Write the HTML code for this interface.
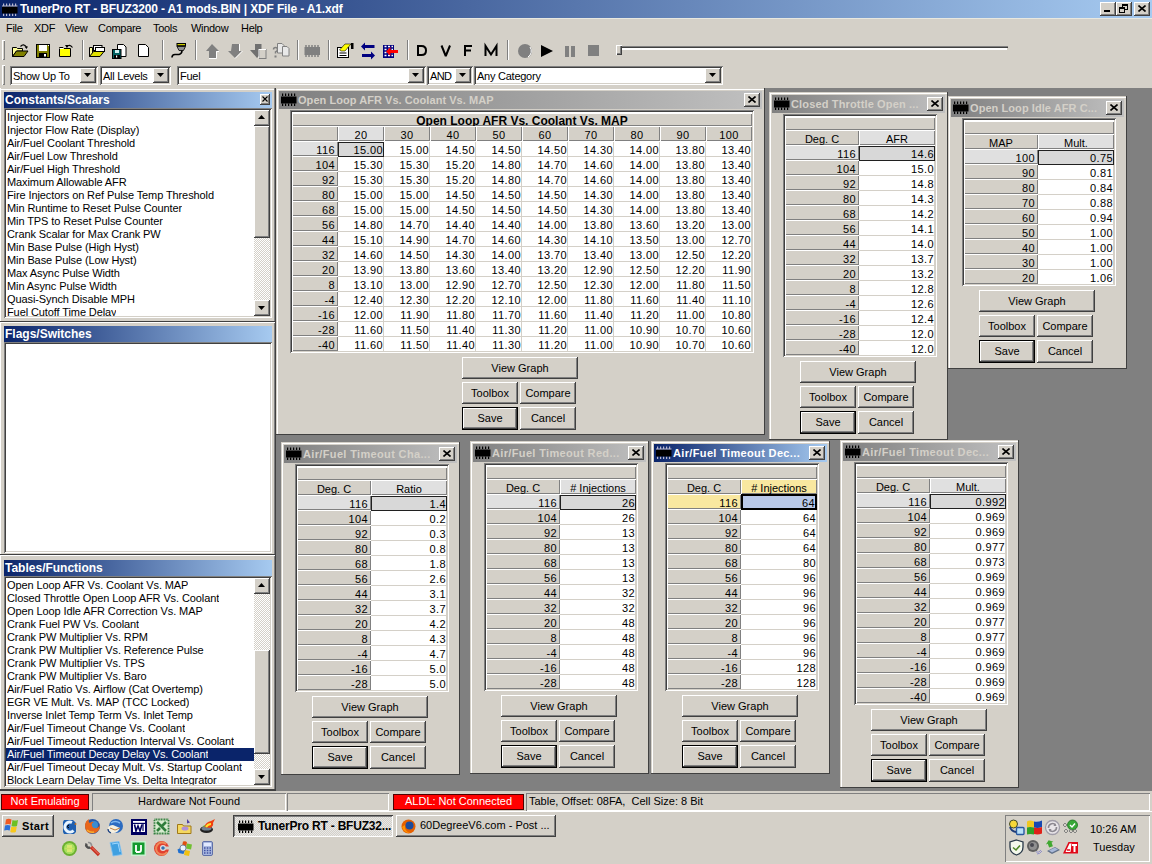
<!DOCTYPE html><html><head><meta charset="utf-8"><style>
html,body{margin:0;padding:0;width:1152px;height:864px;overflow:hidden;background:#D4D0C8;}
body{position:relative;font-family:"Liberation Sans",sans-serif;font-size:11px;color:#000;}
div{position:absolute;box-sizing:border-box;}
</style></head><body>
<div style="left:0px;top:0px;width:1152px;height:18px;background:linear-gradient(to right,#0A246A,#A6CAF0);"></div>
<svg style="position:absolute;left:2px;top:3px" width="17" height="13" viewBox="0 0 17 13"><rect x="1.0" y="0.5" width="1.2" height="2.5" fill="#B8B8D0"/><rect x="1.0" y="10.5" width="1.2" height="2.5" fill="#B8B8D0"/><rect x="4.0" y="0.5" width="1.2" height="2.5" fill="#B8B8D0"/><rect x="4.0" y="10.5" width="1.2" height="2.5" fill="#B8B8D0"/><rect x="7.0" y="0.5" width="1.2" height="2.5" fill="#B8B8D0"/><rect x="7.0" y="10.5" width="1.2" height="2.5" fill="#B8B8D0"/><rect x="10.0" y="0.5" width="1.2" height="2.5" fill="#B8B8D0"/><rect x="10.0" y="10.5" width="1.2" height="2.5" fill="#B8B8D0"/><rect x="13.0" y="0.5" width="1.2" height="2.5" fill="#B8B8D0"/><rect x="13.0" y="10.5" width="1.2" height="2.5" fill="#B8B8D0"/><rect x="0" y="3.5" width="15.5" height="7" fill="#000"/><rect x="0" y="2.5" width="15.5" height="1" fill="#B8B8D0"/></svg>
<div style="left:20px;top:2px;white-space:nowrap;color:#fff;font-weight:bold;font-size:12px;line-height:14px;letter-spacing:-0.15px">TunerPro RT - BFUZ3200 - A1 mods.BIN | XDF File - A1.xdf</div>
<div style="left:1100px;top:2px;width:16px;height:14px;background:#D4D0C8;box-shadow:inset -1px -1px #404040,inset 1px 1px #fff,inset -2px -2px #808080,inset 2px 2px #D4D0C8;"></div>
<div style="left:1104px;top:10px;width:6px;height:2px;background:#000"></div>
<div style="left:1116px;top:2px;width:16px;height:14px;background:#D4D0C8;box-shadow:inset -1px -1px #404040,inset 1px 1px #fff,inset -2px -2px #808080,inset 2px 2px #D4D0C8;"></div>
<svg style="position:absolute;left:1119px;top:4px" width="10" height="10" viewBox="0 0 10 10"><rect x="3.5" y="0.5" width="5" height="5" fill="none" stroke="#000"/><rect x="3" y="0" width="6" height="2" fill="#000"/><rect x="0.5" y="3.5" width="5" height="5" fill="#D4D0C8" stroke="#000"/><rect x="0" y="3" width="6" height="2" fill="#000"/></svg>
<div style="left:1134px;top:2px;width:16px;height:14px;background:#D4D0C8;box-shadow:inset -1px -1px #404040,inset 1px 1px #fff,inset -2px -2px #808080,inset 2px 2px #D4D0C8;"></div>
<svg style="position:absolute;left:1138px;top:5px" width="8" height="7" viewBox="0 0 8 7"><path d="M0.5 0.5L7.5 6.5M7.5 0.5L0.5 6.5" stroke="#000" stroke-width="1.6"/></svg>
<div style="left:0px;top:18px;width:1152px;height:1px;background:#E8E8E0"></div>
<div style="left:6px;top:22px;white-space:nowrap;line-height:13px;letter-spacing:-0.3px">File</div>
<div style="left:34px;top:22px;white-space:nowrap;line-height:13px;letter-spacing:-0.3px">XDF</div>
<div style="left:65px;top:22px;white-space:nowrap;line-height:13px;letter-spacing:-0.3px">View</div>
<div style="left:98px;top:22px;white-space:nowrap;line-height:13px;letter-spacing:-0.3px">Compare</div>
<div style="left:153px;top:22px;white-space:nowrap;line-height:13px;letter-spacing:-0.3px">Tools</div>
<div style="left:191px;top:22px;white-space:nowrap;line-height:13px;letter-spacing:-0.3px">Window</div>
<div style="left:241px;top:22px;white-space:nowrap;line-height:13px;letter-spacing:-0.3px">Help</div>
<div style="left:2px;top:40px;width:3px;height:20px;box-shadow:inset 1px 1px #fff,inset -1px -1px #808080"></div>
<svg style="position:absolute;left:0;top:38px" width="640" height="24" viewBox="0 0 640 24">
<!-- open folder 1 -->
<path d="M12.5 9.5h4l1 1h5v2.5h-6l-4 5.5z" fill="#FFFF99" stroke="#000"/>
<path d="M12.5 18.5l4-5.5h11.5l-4 5.5z" fill="#808000" stroke="#000"/>
<path d="M20.5 8.5q3-3.5 6 0.5" fill="none" stroke="#000" stroke-width="1.2"/><path d="M24.5 8.5h3.5l-1.5 2.5z" fill="#000"/>
<!-- save -->
<rect x="36.5" y="6.5" width="13" height="13" fill="#808000" stroke="#000"/>
<rect x="39" y="7" width="8" height="6" fill="#fff"/>
<rect x="39" y="15" width="8" height="4.5" fill="#000"/><rect x="44" y="16" width="2" height="2.5" fill="#fff"/>
<rect x="48" y="7" width="1" height="1" fill="#fff"/>
<!-- closed folder with arrow -->
<path d="M59.5 9.5h3.5l1 1h6.5v8h-11z" fill="#FFFF00" stroke="#000"/>
<path d="M59.5 10.5h4" stroke="#fff" stroke-width="1"/>
<path d="M66.5 9q3-3.5 6 0.5" fill="none" stroke="#000" stroke-width="1.2"/><path d="M65 7h3.5l-1.5 3z" fill="#000"/>
<!-- open multiple -->
<path d="M89.5 9.5h3v9h-3z" fill="#FFFF99" stroke="#000"/>
<rect x="93.5" y="7.5" width="8.5" height="5" fill="#fff" stroke="#000"/>
<rect x="95.5" y="9.5" width="9" height="4" fill="#fff" stroke="#000"/>
<path d="M89.5 18.5l4-5h10.5l-4 5z" fill="#E0E000" stroke="#000"/>
<!-- save multiple -->
<path d="M117.5 6.5h6l2.5 2.5v9.5h-8.5z" fill="#fff" stroke="#000"/>
<rect x="112.5" y="11.5" width="8.5" height="9" fill="#006060" stroke="#000"/>
<rect x="115" y="12" width="4" height="3" fill="#D0F0F0"/>
<rect x="114" y="17" width="6" height="3" fill="#000"/><rect x="116" y="17.5" width="1.2" height="2" fill="#fff"/>
<!-- new doc -->
<path d="M138.5 6.5h7l3 3v9h-10z" fill="#fff" stroke="#000"/>
<!-- plug -->
<rect x="176.5" y="5" width="9.5" height="3.5" fill="#000"/>
<rect x="177.5" y="6" width="7.5" height="1.2" fill="#CCCC00"/>
<path d="M177 8.5h8.5l-2 4h-4.5z" fill="#909090" stroke="#000" stroke-width="0.8"/>
<path d="M182 12.5q0 3-3 4h-4q-3 0-3 3" fill="none" stroke="#000" stroke-width="1.6"/>
<!-- up arrow -->
<path d="M212 6l7 7h-3v7h-7v-7h-3z" fill="#808080"/>
<path d="M216.5 13.5h2.5M216.5 13.5v7M209 20.5h7.5" stroke="#fff" stroke-width="1"/>
<!-- down arrow -->
<path d="M232 6h7v7h3l-7 7-7-7h3z" fill="#808080"/>
<path d="M242.5 13l-7.5 7.5M239.5 6v7" stroke="#fff" stroke-width="1"/>
<!-- down + doc -->
<path d="M255 6h6.5v6h3l-7.5 8-7-8h5z" fill="#707070"/>
<rect x="259.5" y="11.5" width="6.5" height="9" fill="#D4D0C8" stroke="#808080"/>
<path d="M259 11.5h7M259 11v9" stroke="#fff" stroke-width="1"/>
<!-- ?doc -->
<path d="M273.5 11.5q0-2 2-2t2 2q0 1.5-2 2.5v1.5" fill="none" stroke="#808080" stroke-width="1.5"/><rect x="274.5" y="17.5" width="2" height="2" fill="#808080"/>
<path d="M277.5 5.5h4.5l2 2v7.5h-6.5z" fill="#E8E8E8" stroke="#808080"/>
<path d="M282.5 8.5h4.5l2 2v7.5h-6.5z" fill="#E8E8E8" stroke="#808080"/>
<!-- gray chip -->
<rect x="304.5" y="9" width="15.5" height="8" fill="#808080"/>
<path d="M306 7v2M309 7v2M312 7v2M315 7v2M318 7v2M306 17v2M309 17v2M312 17v2M315 17v2M318 17v2" stroke="#808080" stroke-width="1.5"/>
<!-- properties -->
<rect x="337.5" y="9.5" width="11" height="10" fill="#fff" stroke="#000"/>
<path d="M339.5 15h7M339.5 17.5h7" stroke="#000" stroke-width="1"/>
<path d="M339.5 12l5.5-6h6l-6 7h-4z" fill="#FFFF00" stroke="#000" stroke-width="0.6"/>
<rect x="351" y="5" width="2.5" height="6" fill="#000"/>
<!-- swap arrows -->
<path d="M361 8.5l4-4v2.5h9.5v3h-9.5v2.5z" fill="#000080"/>
<path d="M375 17.5l-4-4v2.5h-9v3h9v2.5z" fill="#000080"/>
<!-- grid + red arrow -->
<rect x="383" y="7" width="11" height="13" fill="#000080"/>
<path d="M384.5 8.5h2M388 8.5h2M391.5 8.5h1.5M384.5 11.5h2M388 11.5h2M391.5 11.5h1.5M384.5 14.5h2M388 14.5h2M391.5 14.5h1.5M384.5 17.5h2M388 17.5h2M391.5 17.5h1.5" stroke="#fff" stroke-width="1.6"/>
<path d="M386 13.5l4.5-4.5v3h7.5v3h-7.5v3z" fill="#FF0000"/>
<!-- DVFM -->
<path d="M418 8h3.5q4.5 0 4.5 4.5t-4.5 4.5h-3.5z" fill="none" stroke="#000" stroke-width="2"/>
<path d="M441.5 7.5l4.25 10.5l4.25-10.5" fill="none" stroke="#000" stroke-width="2" stroke-linejoin="bevel"/>
<path d="M465 18V8h7M465 12.5h6" fill="none" stroke="#000" stroke-width="2"/>
<path d="M485.5 18V8l5.5 8.5 5.5-8.5v10" fill="none" stroke="#000" stroke-width="2" stroke-linejoin="miter"/>
<!-- record -->
<circle cx="525" cy="13" r="7" fill="#808080"/><path d="M530 9a7 7 0 0 1 -2 10" stroke="#fff" stroke-width="1" fill="none"/>
<!-- play -->
<path d="M541 7l12 6-12 6z" fill="#000"/>
<!-- pause -->
<rect x="565" y="8" width="4" height="11" fill="#808080"/><rect x="571" y="8" width="4" height="11" fill="#808080"/>
<!-- stop -->
<rect x="588" y="7" width="11" height="11" fill="#808080"/>
</svg>
<div style="left:82px;top:40px;width:2px;height:20px;box-shadow:inset 1px 0 #808080,inset -1px 0 #fff"></div>
<div style="left:162px;top:40px;width:2px;height:20px;box-shadow:inset 1px 0 #808080,inset -1px 0 #fff"></div>
<div style="left:195px;top:40px;width:2px;height:20px;box-shadow:inset 1px 0 #808080,inset -1px 0 #fff"></div>
<div style="left:297px;top:40px;width:2px;height:20px;box-shadow:inset 1px 0 #808080,inset -1px 0 #fff"></div>
<div style="left:328px;top:40px;width:2px;height:20px;box-shadow:inset 1px 0 #808080,inset -1px 0 #fff"></div>
<div style="left:407px;top:40px;width:2px;height:20px;box-shadow:inset 1px 0 #808080,inset -1px 0 #fff"></div>
<div style="left:507px;top:40px;width:2px;height:20px;box-shadow:inset 1px 0 #808080,inset -1px 0 #fff"></div>
<div style="left:617px;top:46px;width:391px;height:5px;box-shadow:inset 0 1px #808080,inset 0 2px #404040,inset -1px -1px #D4D0C8;background:#fff"></div>
<div style="left:616px;top:45px;width:6px;height:10px;background:#D4D0C8;box-shadow:inset 1px 1px #fff,inset -1px -1px #404040,inset -2px -2px #808080"></div>
<div style="left:2px;top:65px;width:3px;height:20px;box-shadow:inset 1px 1px #fff,inset -1px -1px #808080"></div>
<div style="left:10px;top:66px;width:88px;height:19px;background:#fff;box-shadow:inset 1px 1px #808080,inset -1px -1px #fff,inset 2px 2px #404040,inset -2px -2px #D4D0C8;"></div>
<div style="left:13px;top:70px;white-space:nowrap;line-height:13px;letter-spacing:-0.25px;">Show Up To</div>
<div style="left:80px;top:68px;width:16px;height:15px;background:#D4D0C8;box-shadow:inset -1px -1px #404040,inset 1px 1px #fff,inset -2px -2px #808080,inset 2px 2px #D4D0C8;"><svg style="position:absolute;left:4px;top:5px" width="8" height="5"><path d="M0 0h7l-3.5 4z" fill="#000"/></svg></div>
<div style="left:100px;top:66px;width:71px;height:19px;background:#fff;box-shadow:inset 1px 1px #808080,inset -1px -1px #fff,inset 2px 2px #404040,inset -2px -2px #D4D0C8;"></div>
<div style="left:103px;top:70px;white-space:nowrap;line-height:13px;letter-spacing:-0.25px;">All Levels</div>
<div style="left:153px;top:68px;width:16px;height:15px;background:#D4D0C8;box-shadow:inset -1px -1px #404040,inset 1px 1px #fff,inset -2px -2px #808080,inset 2px 2px #D4D0C8;"><svg style="position:absolute;left:4px;top:5px" width="8" height="5"><path d="M0 0h7l-3.5 4z" fill="#000"/></svg></div>
<div style="left:177px;top:66px;width:249px;height:19px;background:#fff;box-shadow:inset 1px 1px #808080,inset -1px -1px #fff,inset 2px 2px #404040,inset -2px -2px #D4D0C8;"></div>
<div style="left:180px;top:70px;white-space:nowrap;line-height:13px;letter-spacing:-0.25px;">Fuel</div>
<div style="left:408px;top:68px;width:16px;height:15px;background:#D4D0C8;box-shadow:inset -1px -1px #404040,inset 1px 1px #fff,inset -2px -2px #808080,inset 2px 2px #D4D0C8;"><svg style="position:absolute;left:4px;top:5px" width="8" height="5"><path d="M0 0h7l-3.5 4z" fill="#000"/></svg></div>
<div style="left:427px;top:66px;width:46px;height:19px;background:#fff;box-shadow:inset 1px 1px #808080,inset -1px -1px #fff,inset 2px 2px #404040,inset -2px -2px #D4D0C8;"></div>
<div style="left:430px;top:70px;white-space:nowrap;line-height:13px;letter-spacing:-0.25px;letter-spacing:-0.6px">AND</div>
<div style="left:455px;top:68px;width:16px;height:15px;background:#D4D0C8;box-shadow:inset -1px -1px #404040,inset 1px 1px #fff,inset -2px -2px #808080,inset 2px 2px #D4D0C8;"><svg style="position:absolute;left:4px;top:5px" width="8" height="5"><path d="M0 0h7l-3.5 4z" fill="#000"/></svg></div>
<div style="left:474px;top:66px;width:249px;height:19px;background:#fff;box-shadow:inset 1px 1px #808080,inset -1px -1px #fff,inset 2px 2px #404040,inset -2px -2px #D4D0C8;"></div>
<div style="left:477px;top:70px;white-space:nowrap;line-height:13px;letter-spacing:-0.25px;">Any Category</div>
<div style="left:705px;top:68px;width:16px;height:15px;background:#D4D0C8;box-shadow:inset -1px -1px #404040,inset 1px 1px #fff,inset -2px -2px #808080,inset 2px 2px #D4D0C8;"><svg style="position:absolute;left:4px;top:5px" width="8" height="5"><path d="M0 0h7l-3.5 4z" fill="#000"/></svg></div>
<div style="left:0px;top:88px;width:276px;height:703px;background:#D4D0C8"></div>
<div style="left:0px;top:88px;width:1px;height:703px;background:#fff"></div>
<div style="left:0px;top:89px;width:275px;height:1px;background:#fff"></div>
<div style="left:274px;top:88px;width:1px;height:703px;background:#808080"></div>
<div style="left:275px;top:88px;width:1px;height:703px;background:#404040"></div>
<div style="left:0px;top:321px;width:275px;height:1px;background:#404040"></div>
<div style="left:0px;top:322px;width:275px;height:1px;background:#fff"></div>
<div style="left:0px;top:554px;width:275px;height:1px;background:#404040"></div>
<div style="left:0px;top:555px;width:275px;height:1px;background:#fff"></div>
<div style="left:4px;top:92px;width:268px;height:16px;background:linear-gradient(to right,#0A246A,#A6CAF0);"></div>
<div style="left:5px;top:93px;white-space:nowrap;color:#fff;font-weight:bold;font-size:12px;line-height:14px">Constants/Scalars</div>
<div style="left:4px;top:108px;width:268px;height:210px;background:#fff;box-shadow:inset 1px 1px #808080,inset -1px -1px #fff,inset 2px 2px #404040,inset -2px -2px #D4D0C8;"></div>
<div style="left:7px;top:111px;white-space:nowrap;letter-spacing:-0.1px;line-height:13px;overflow:hidden;height:13px">Injector Flow Rate</div>
<div style="left:7px;top:124px;white-space:nowrap;letter-spacing:-0.1px;line-height:13px;overflow:hidden;height:13px">Injector Flow Rate (Display)</div>
<div style="left:7px;top:137px;white-space:nowrap;letter-spacing:-0.1px;line-height:13px;overflow:hidden;height:13px">Air/Fuel Coolant Threshold</div>
<div style="left:7px;top:150px;white-space:nowrap;letter-spacing:-0.1px;line-height:13px;overflow:hidden;height:13px">Air/Fuel Low Threshold</div>
<div style="left:7px;top:163px;white-space:nowrap;letter-spacing:-0.1px;line-height:13px;overflow:hidden;height:13px">Air/Fuel High Threshold</div>
<div style="left:7px;top:176px;white-space:nowrap;letter-spacing:-0.1px;line-height:13px;overflow:hidden;height:13px">Maximum Allowable AFR</div>
<div style="left:7px;top:189px;white-space:nowrap;letter-spacing:-0.1px;line-height:13px;overflow:hidden;height:13px">Fire Injectors on Ref Pulse Temp Threshold</div>
<div style="left:7px;top:202px;white-space:nowrap;letter-spacing:-0.1px;line-height:13px;overflow:hidden;height:13px">Min Runtime to Reset Pulse Counter</div>
<div style="left:7px;top:215px;white-space:nowrap;letter-spacing:-0.1px;line-height:13px;overflow:hidden;height:13px">Min TPS to Reset Pulse Counter</div>
<div style="left:7px;top:228px;white-space:nowrap;letter-spacing:-0.1px;line-height:13px;overflow:hidden;height:13px">Crank Scalar for Max Crank PW</div>
<div style="left:7px;top:241px;white-space:nowrap;letter-spacing:-0.1px;line-height:13px;overflow:hidden;height:13px">Min Base Pulse (High Hyst)</div>
<div style="left:7px;top:254px;white-space:nowrap;letter-spacing:-0.1px;line-height:13px;overflow:hidden;height:13px">Min Base Pulse (Low Hyst)</div>
<div style="left:7px;top:267px;white-space:nowrap;letter-spacing:-0.1px;line-height:13px;overflow:hidden;height:13px">Max Async Pulse Width</div>
<div style="left:7px;top:280px;white-space:nowrap;letter-spacing:-0.1px;line-height:13px;overflow:hidden;height:13px">Min Async Pulse Width</div>
<div style="left:7px;top:293px;white-space:nowrap;letter-spacing:-0.1px;line-height:13px;overflow:hidden;height:13px">Quasi-Synch Disable MPH</div>
<div style="left:7px;top:306px;white-space:nowrap;letter-spacing:-0.1px;line-height:13px;overflow:hidden;height:10px">Fuel Cutoff Time Delay</div>
<div style="left:254px;top:110px;width:16px;height:206px;background-color:#fff;background-image:linear-gradient(45deg,#D4D0C8 25%,transparent 25%,transparent 75%,#D4D0C8 75%),linear-gradient(45deg,#D4D0C8 25%,transparent 25%,transparent 75%,#D4D0C8 75%);background-size:2px 2px;background-position:0 0,1px 1px;"></div>
<div style="left:254px;top:110px;width:16px;height:16px;background:#D4D0C8;box-shadow:inset -1px -1px #404040,inset 1px 1px #fff,inset -2px -2px #808080,inset 2px 2px #D4D0C8;"><svg style="position:absolute;left:4px;top:5px" width="8" height="5"><path d="M3.5 0L7 4H0z" fill="#000"/></svg></div>
<div style="left:254px;top:300px;width:16px;height:16px;background:#D4D0C8;box-shadow:inset -1px -1px #404040,inset 1px 1px #fff,inset -2px -2px #808080,inset 2px 2px #D4D0C8;"><svg style="position:absolute;left:4px;top:6px" width="8" height="5"><path d="M0 0h7l-3.5 4z" fill="#000"/></svg></div>
<div style="left:254px;top:126px;width:16px;height:112px;background:#D4D0C8;box-shadow:inset -1px -1px #404040,inset 1px 1px #fff,inset -2px -2px #808080,inset 2px 2px #D4D0C8;"></div>
<div style="left:260px;top:94px;width:10px;height:11px;background:#D4D0C8;box-shadow:inset -1px -1px #404040,inset 1px 1px #fff,inset -2px -2px #808080;"><svg style="position:absolute;left:2px;top:2px" width="6" height="6" viewBox="0 0 6 6"><path d="M0.5 0.5L5.5 5.5M5.5 0.5L0.5 5.5" stroke="#000" stroke-width="1.1"/></svg></div>
<div style="left:4px;top:326px;width:268px;height:16px;background:linear-gradient(to right,#0A246A,#A6CAF0);"></div>
<div style="left:5px;top:327px;white-space:nowrap;color:#fff;font-weight:bold;font-size:12px;line-height:14px">Flags/Switches</div>
<div style="left:4px;top:342px;width:268px;height:211px;background:#fff;box-shadow:inset 1px 1px #808080,inset -1px -1px #fff,inset 2px 2px #404040,inset -2px -2px #D4D0C8;"></div>
<div style="left:4px;top:560px;width:268px;height:16px;background:linear-gradient(to right,#0A246A,#A6CAF0);"></div>
<div style="left:5px;top:561px;white-space:nowrap;color:#fff;font-weight:bold;font-size:12px;line-height:14px">Tables/Functions</div>
<div style="left:4px;top:576px;width:268px;height:211px;background:#fff;box-shadow:inset 1px 1px #808080,inset -1px -1px #fff,inset 2px 2px #404040,inset -2px -2px #D4D0C8;"></div>
<div style="left:7px;top:579px;white-space:nowrap;letter-spacing:-0.1px;line-height:13px;overflow:hidden;height:13px">Open Loop AFR Vs. Coolant Vs. MAP</div>
<div style="left:7px;top:592px;white-space:nowrap;letter-spacing:-0.1px;line-height:13px;overflow:hidden;height:13px">Closed Throttle Open Loop AFR Vs. Coolant</div>
<div style="left:7px;top:605px;white-space:nowrap;letter-spacing:-0.1px;line-height:13px;overflow:hidden;height:13px">Open Loop Idle AFR Correction Vs. MAP</div>
<div style="left:7px;top:618px;white-space:nowrap;letter-spacing:-0.1px;line-height:13px;overflow:hidden;height:13px">Crank Fuel PW Vs. Coolant</div>
<div style="left:7px;top:631px;white-space:nowrap;letter-spacing:-0.1px;line-height:13px;overflow:hidden;height:13px">Crank PW Multiplier Vs. RPM</div>
<div style="left:7px;top:644px;white-space:nowrap;letter-spacing:-0.1px;line-height:13px;overflow:hidden;height:13px">Crank PW Multiplier Vs. Reference Pulse</div>
<div style="left:7px;top:657px;white-space:nowrap;letter-spacing:-0.1px;line-height:13px;overflow:hidden;height:13px">Crank PW Multiplier Vs. TPS</div>
<div style="left:7px;top:670px;white-space:nowrap;letter-spacing:-0.1px;line-height:13px;overflow:hidden;height:13px">Crank PW Multiplier Vs. Baro</div>
<div style="left:7px;top:683px;white-space:nowrap;letter-spacing:-0.1px;line-height:13px;overflow:hidden;height:13px">Air/Fuel Ratio Vs. Airflow (Cat Overtemp)</div>
<div style="left:7px;top:696px;white-space:nowrap;letter-spacing:-0.1px;line-height:13px;overflow:hidden;height:13px">EGR VE Mult. Vs. MAP (TCC Locked)</div>
<div style="left:7px;top:709px;white-space:nowrap;letter-spacing:-0.1px;line-height:13px;overflow:hidden;height:13px">Inverse Inlet Temp Term Vs. Inlet Temp</div>
<div style="left:7px;top:722px;white-space:nowrap;letter-spacing:-0.1px;line-height:13px;overflow:hidden;height:13px">Air/Fuel Timeout Change Vs. Coolant</div>
<div style="left:7px;top:735px;white-space:nowrap;letter-spacing:-0.1px;line-height:13px;overflow:hidden;height:13px">Air/Fuel Timeout Reduction Interval Vs. Coolant</div>
<div style="left:6px;top:748px;width:248px;height:13px;background:#0A246A"></div>
<div style="left:7px;top:748px;white-space:nowrap;letter-spacing:-0.1px;line-height:13px;color:#fff;overflow:hidden;height:13px">Air/Fuel Timeout Decay Delay Vs. Coolant</div>
<div style="left:7px;top:761px;white-space:nowrap;letter-spacing:-0.1px;line-height:13px;overflow:hidden;height:13px">Air/Fuel Timeout Decay Mult. Vs. Startup Coolant</div>
<div style="left:7px;top:774px;white-space:nowrap;letter-spacing:-0.1px;line-height:13px;overflow:hidden;height:11px">Block Learn Delay Time Vs. Delta Integrator</div>
<div style="left:254px;top:578px;width:16px;height:207px;background-color:#fff;background-image:linear-gradient(45deg,#D4D0C8 25%,transparent 25%,transparent 75%,#D4D0C8 75%),linear-gradient(45deg,#D4D0C8 25%,transparent 25%,transparent 75%,#D4D0C8 75%);background-size:2px 2px;background-position:0 0,1px 1px;"></div>
<div style="left:254px;top:578px;width:16px;height:16px;background:#D4D0C8;box-shadow:inset -1px -1px #404040,inset 1px 1px #fff,inset -2px -2px #808080,inset 2px 2px #D4D0C8;"><svg style="position:absolute;left:4px;top:5px" width="8" height="5"><path d="M3.5 0L7 4H0z" fill="#000"/></svg></div>
<div style="left:254px;top:769px;width:16px;height:16px;background:#D4D0C8;box-shadow:inset -1px -1px #404040,inset 1px 1px #fff,inset -2px -2px #808080,inset 2px 2px #D4D0C8;"><svg style="position:absolute;left:4px;top:6px" width="8" height="5"><path d="M0 0h7l-3.5 4z" fill="#000"/></svg></div>
<div style="left:254px;top:650px;width:16px;height:104px;background:#D4D0C8;box-shadow:inset -1px -1px #404040,inset 1px 1px #fff,inset -2px -2px #808080,inset 2px 2px #D4D0C8;"></div>
<div style="left:0px;top:789px;width:275px;height:2px;background:#404040"></div>
<div style="left:276px;top:88px;width:876px;height:703px;background:#808080"></div>
<div style="left:276px;top:88px;width:489px;height:347px;background:#D4D0C8;box-shadow:inset -1px -1px #404040,inset 1px 1px #D4D0C8,inset 2px 2px #fff;"></div>
<div style="left:279px;top:91px;width:483px;height:18px;background:linear-gradient(to right,#808080,#C0C0C0)"></div>
<svg style="position:absolute;left:281px;top:93px" width="17" height="13" viewBox="0 0 17 13"><rect x="1.0" y="0.5" width="1.2" height="2.5" fill="#000"/><rect x="1.0" y="10.5" width="1.2" height="2.5" fill="#000"/><rect x="4.0" y="0.5" width="1.2" height="2.5" fill="#000"/><rect x="4.0" y="10.5" width="1.2" height="2.5" fill="#000"/><rect x="7.0" y="0.5" width="1.2" height="2.5" fill="#000"/><rect x="7.0" y="10.5" width="1.2" height="2.5" fill="#000"/><rect x="10.0" y="0.5" width="1.2" height="2.5" fill="#000"/><rect x="10.0" y="10.5" width="1.2" height="2.5" fill="#000"/><rect x="13.0" y="0.5" width="1.2" height="2.5" fill="#000"/><rect x="13.0" y="10.5" width="1.2" height="2.5" fill="#000"/><rect x="0" y="3.5" width="15.5" height="7" fill="#000"/></svg>
<div style="left:298px;top:93px;white-space:nowrap;color:#D4D0C8;font-weight:bold;font-size:11px;line-height:14px;letter-spacing:0.05px">Open Loop AFR Vs. Coolant Vs. MAP</div>
<div style="left:744px;top:93px;width:16px;height:14px;background:#D4D0C8;box-shadow:inset -1px -1px #404040,inset 1px 1px #fff,inset -2px -2px #808080,inset 2px 2px #D4D0C8;"><svg style="position:absolute;left:4px;top:3px" width="8" height="7" viewBox="0 0 8 7"><path d="M0.5 0.5L7.5 6.5M7.5 0.5L0.5 6.5" stroke="#000" stroke-width="1.6"/></svg></div>
<div style="left:290px;top:110px;width:464px;height:243px;background:#fff;box-shadow:inset 1px 1px #808080,inset -1px -1px #fff,inset 2px 2px #404040,inset -2px -2px #D4D0C8;"></div>
<div style="left:292px;top:113px;width:460px;height:13px;background:#D4D0C8;box-shadow:inset 1px 1px #fff,inset -1px -1px #808080;"><div style="position:absolute;left:0;right:0;top:2px;line-height:13px;text-align:center;font-weight:bold;font-size:12px;white-space:nowrap">Open Loop AFR Vs. Coolant Vs. MAP</div></div>
<div style="left:292px;top:126px;width:46px;height:15px;background:#D4D0C8;box-shadow:inset 1px 1px #fff,inset -1px -1px #808080;"><div style="position:absolute;left:0;right:0;top:3px;line-height:13px;text-align:center;white-space:nowrap"></div></div>
<div style="left:338px;top:126px;width:46px;height:15px;background:#E0E0E0;box-shadow:inset 1px 1px #fff,inset -1px -1px #808080;"><div style="position:absolute;left:0;right:0;top:3px;line-height:13px;text-align:center;letter-spacing:0.4px;white-space:nowrap">20</div></div>
<div style="left:384px;top:126px;width:46px;height:15px;background:#D4D0C8;box-shadow:inset 1px 1px #fff,inset -1px -1px #808080;"><div style="position:absolute;left:0;right:0;top:3px;line-height:13px;text-align:center;letter-spacing:0.4px;white-space:nowrap">30</div></div>
<div style="left:430px;top:126px;width:46px;height:15px;background:#D4D0C8;box-shadow:inset 1px 1px #fff,inset -1px -1px #808080;"><div style="position:absolute;left:0;right:0;top:3px;line-height:13px;text-align:center;letter-spacing:0.4px;white-space:nowrap">40</div></div>
<div style="left:476px;top:126px;width:46px;height:15px;background:#D4D0C8;box-shadow:inset 1px 1px #fff,inset -1px -1px #808080;"><div style="position:absolute;left:0;right:0;top:3px;line-height:13px;text-align:center;letter-spacing:0.4px;white-space:nowrap">50</div></div>
<div style="left:522px;top:126px;width:46px;height:15px;background:#D4D0C8;box-shadow:inset 1px 1px #fff,inset -1px -1px #808080;"><div style="position:absolute;left:0;right:0;top:3px;line-height:13px;text-align:center;letter-spacing:0.4px;white-space:nowrap">60</div></div>
<div style="left:568px;top:126px;width:46px;height:15px;background:#D4D0C8;box-shadow:inset 1px 1px #fff,inset -1px -1px #808080;"><div style="position:absolute;left:0;right:0;top:3px;line-height:13px;text-align:center;letter-spacing:0.4px;white-space:nowrap">70</div></div>
<div style="left:614px;top:126px;width:46px;height:15px;background:#D4D0C8;box-shadow:inset 1px 1px #fff,inset -1px -1px #808080;"><div style="position:absolute;left:0;right:0;top:3px;line-height:13px;text-align:center;letter-spacing:0.4px;white-space:nowrap">80</div></div>
<div style="left:660px;top:126px;width:46px;height:15px;background:#D4D0C8;box-shadow:inset 1px 1px #fff,inset -1px -1px #808080;"><div style="position:absolute;left:0;right:0;top:3px;line-height:13px;text-align:center;letter-spacing:0.4px;white-space:nowrap">90</div></div>
<div style="left:706px;top:126px;width:46px;height:15px;background:#D4D0C8;box-shadow:inset 1px 1px #fff,inset -1px -1px #808080;"><div style="position:absolute;left:0;right:0;top:3px;line-height:13px;text-align:center;letter-spacing:0.4px;white-space:nowrap">100</div></div>
<div style="left:292px;top:141px;width:46px;height:15px;background:#E0E0E0;box-shadow:inset 1px 1px #fff,inset -1px -1px #808080;"><div style="position:absolute;left:0;right:0;top:3px;line-height:13px;text-align:right;padding-right:3px;letter-spacing:0.4px;white-space:nowrap">116</div></div>
<div style="left:338px;top:142px;width:46px;height:15px;background:#D8D8D8;box-shadow:inset 0 0 0 1px #202020;"><div style="position:absolute;left:0;right:0;top:2px;line-height:13px;text-align:right;padding-right:1px;letter-spacing:0.4px;white-space:nowrap">15.00</div></div>
<div style="left:384px;top:142px;width:46px;height:15px;background:#fff;box-shadow:inset -1px -1px #D4D0C8;"><div style="position:absolute;left:0;right:0;top:2px;line-height:13px;text-align:right;padding-right:1px;letter-spacing:0.4px;white-space:nowrap">15.00</div></div>
<div style="left:430px;top:142px;width:46px;height:15px;background:#fff;box-shadow:inset -1px -1px #D4D0C8;"><div style="position:absolute;left:0;right:0;top:2px;line-height:13px;text-align:right;padding-right:1px;letter-spacing:0.4px;white-space:nowrap">14.50</div></div>
<div style="left:476px;top:142px;width:46px;height:15px;background:#fff;box-shadow:inset -1px -1px #D4D0C8;"><div style="position:absolute;left:0;right:0;top:2px;line-height:13px;text-align:right;padding-right:1px;letter-spacing:0.4px;white-space:nowrap">14.50</div></div>
<div style="left:522px;top:142px;width:46px;height:15px;background:#fff;box-shadow:inset -1px -1px #D4D0C8;"><div style="position:absolute;left:0;right:0;top:2px;line-height:13px;text-align:right;padding-right:1px;letter-spacing:0.4px;white-space:nowrap">14.50</div></div>
<div style="left:568px;top:142px;width:46px;height:15px;background:#fff;box-shadow:inset -1px -1px #D4D0C8;"><div style="position:absolute;left:0;right:0;top:2px;line-height:13px;text-align:right;padding-right:1px;letter-spacing:0.4px;white-space:nowrap">14.30</div></div>
<div style="left:614px;top:142px;width:46px;height:15px;background:#fff;box-shadow:inset -1px -1px #D4D0C8;"><div style="position:absolute;left:0;right:0;top:2px;line-height:13px;text-align:right;padding-right:1px;letter-spacing:0.4px;white-space:nowrap">14.00</div></div>
<div style="left:660px;top:142px;width:46px;height:15px;background:#fff;box-shadow:inset -1px -1px #D4D0C8;"><div style="position:absolute;left:0;right:0;top:2px;line-height:13px;text-align:right;padding-right:1px;letter-spacing:0.4px;white-space:nowrap">13.80</div></div>
<div style="left:706px;top:142px;width:46px;height:15px;background:#fff;box-shadow:inset -1px -1px #D4D0C8;"><div style="position:absolute;left:0;right:0;top:2px;line-height:13px;text-align:right;padding-right:1px;letter-spacing:0.4px;white-space:nowrap">13.40</div></div>
<div style="left:292px;top:156px;width:46px;height:15px;background:#D4D0C8;box-shadow:inset 1px 1px #fff,inset -1px -1px #808080;"><div style="position:absolute;left:0;right:0;top:3px;line-height:13px;text-align:right;padding-right:3px;letter-spacing:0.4px;white-space:nowrap">104</div></div>
<div style="left:338px;top:157px;width:46px;height:15px;background:#fff;box-shadow:inset -1px -1px #D4D0C8;"><div style="position:absolute;left:0;right:0;top:2px;line-height:13px;text-align:right;padding-right:1px;letter-spacing:0.4px;white-space:nowrap">15.30</div></div>
<div style="left:384px;top:157px;width:46px;height:15px;background:#fff;box-shadow:inset -1px -1px #D4D0C8;"><div style="position:absolute;left:0;right:0;top:2px;line-height:13px;text-align:right;padding-right:1px;letter-spacing:0.4px;white-space:nowrap">15.30</div></div>
<div style="left:430px;top:157px;width:46px;height:15px;background:#fff;box-shadow:inset -1px -1px #D4D0C8;"><div style="position:absolute;left:0;right:0;top:2px;line-height:13px;text-align:right;padding-right:1px;letter-spacing:0.4px;white-space:nowrap">15.20</div></div>
<div style="left:476px;top:157px;width:46px;height:15px;background:#fff;box-shadow:inset -1px -1px #D4D0C8;"><div style="position:absolute;left:0;right:0;top:2px;line-height:13px;text-align:right;padding-right:1px;letter-spacing:0.4px;white-space:nowrap">14.80</div></div>
<div style="left:522px;top:157px;width:46px;height:15px;background:#fff;box-shadow:inset -1px -1px #D4D0C8;"><div style="position:absolute;left:0;right:0;top:2px;line-height:13px;text-align:right;padding-right:1px;letter-spacing:0.4px;white-space:nowrap">14.70</div></div>
<div style="left:568px;top:157px;width:46px;height:15px;background:#fff;box-shadow:inset -1px -1px #D4D0C8;"><div style="position:absolute;left:0;right:0;top:2px;line-height:13px;text-align:right;padding-right:1px;letter-spacing:0.4px;white-space:nowrap">14.60</div></div>
<div style="left:614px;top:157px;width:46px;height:15px;background:#fff;box-shadow:inset -1px -1px #D4D0C8;"><div style="position:absolute;left:0;right:0;top:2px;line-height:13px;text-align:right;padding-right:1px;letter-spacing:0.4px;white-space:nowrap">14.00</div></div>
<div style="left:660px;top:157px;width:46px;height:15px;background:#fff;box-shadow:inset -1px -1px #D4D0C8;"><div style="position:absolute;left:0;right:0;top:2px;line-height:13px;text-align:right;padding-right:1px;letter-spacing:0.4px;white-space:nowrap">13.80</div></div>
<div style="left:706px;top:157px;width:46px;height:15px;background:#fff;box-shadow:inset -1px -1px #D4D0C8;"><div style="position:absolute;left:0;right:0;top:2px;line-height:13px;text-align:right;padding-right:1px;letter-spacing:0.4px;white-space:nowrap">13.40</div></div>
<div style="left:292px;top:171px;width:46px;height:15px;background:#D4D0C8;box-shadow:inset 1px 1px #fff,inset -1px -1px #808080;"><div style="position:absolute;left:0;right:0;top:3px;line-height:13px;text-align:right;padding-right:3px;letter-spacing:0.4px;white-space:nowrap">92</div></div>
<div style="left:338px;top:172px;width:46px;height:15px;background:#fff;box-shadow:inset -1px -1px #D4D0C8;"><div style="position:absolute;left:0;right:0;top:2px;line-height:13px;text-align:right;padding-right:1px;letter-spacing:0.4px;white-space:nowrap">15.30</div></div>
<div style="left:384px;top:172px;width:46px;height:15px;background:#fff;box-shadow:inset -1px -1px #D4D0C8;"><div style="position:absolute;left:0;right:0;top:2px;line-height:13px;text-align:right;padding-right:1px;letter-spacing:0.4px;white-space:nowrap">15.30</div></div>
<div style="left:430px;top:172px;width:46px;height:15px;background:#fff;box-shadow:inset -1px -1px #D4D0C8;"><div style="position:absolute;left:0;right:0;top:2px;line-height:13px;text-align:right;padding-right:1px;letter-spacing:0.4px;white-space:nowrap">15.20</div></div>
<div style="left:476px;top:172px;width:46px;height:15px;background:#fff;box-shadow:inset -1px -1px #D4D0C8;"><div style="position:absolute;left:0;right:0;top:2px;line-height:13px;text-align:right;padding-right:1px;letter-spacing:0.4px;white-space:nowrap">14.80</div></div>
<div style="left:522px;top:172px;width:46px;height:15px;background:#fff;box-shadow:inset -1px -1px #D4D0C8;"><div style="position:absolute;left:0;right:0;top:2px;line-height:13px;text-align:right;padding-right:1px;letter-spacing:0.4px;white-space:nowrap">14.70</div></div>
<div style="left:568px;top:172px;width:46px;height:15px;background:#fff;box-shadow:inset -1px -1px #D4D0C8;"><div style="position:absolute;left:0;right:0;top:2px;line-height:13px;text-align:right;padding-right:1px;letter-spacing:0.4px;white-space:nowrap">14.60</div></div>
<div style="left:614px;top:172px;width:46px;height:15px;background:#fff;box-shadow:inset -1px -1px #D4D0C8;"><div style="position:absolute;left:0;right:0;top:2px;line-height:13px;text-align:right;padding-right:1px;letter-spacing:0.4px;white-space:nowrap">14.00</div></div>
<div style="left:660px;top:172px;width:46px;height:15px;background:#fff;box-shadow:inset -1px -1px #D4D0C8;"><div style="position:absolute;left:0;right:0;top:2px;line-height:13px;text-align:right;padding-right:1px;letter-spacing:0.4px;white-space:nowrap">13.80</div></div>
<div style="left:706px;top:172px;width:46px;height:15px;background:#fff;box-shadow:inset -1px -1px #D4D0C8;"><div style="position:absolute;left:0;right:0;top:2px;line-height:13px;text-align:right;padding-right:1px;letter-spacing:0.4px;white-space:nowrap">13.40</div></div>
<div style="left:292px;top:186px;width:46px;height:15px;background:#D4D0C8;box-shadow:inset 1px 1px #fff,inset -1px -1px #808080;"><div style="position:absolute;left:0;right:0;top:3px;line-height:13px;text-align:right;padding-right:3px;letter-spacing:0.4px;white-space:nowrap">80</div></div>
<div style="left:338px;top:187px;width:46px;height:15px;background:#fff;box-shadow:inset -1px -1px #D4D0C8;"><div style="position:absolute;left:0;right:0;top:2px;line-height:13px;text-align:right;padding-right:1px;letter-spacing:0.4px;white-space:nowrap">15.00</div></div>
<div style="left:384px;top:187px;width:46px;height:15px;background:#fff;box-shadow:inset -1px -1px #D4D0C8;"><div style="position:absolute;left:0;right:0;top:2px;line-height:13px;text-align:right;padding-right:1px;letter-spacing:0.4px;white-space:nowrap">15.00</div></div>
<div style="left:430px;top:187px;width:46px;height:15px;background:#fff;box-shadow:inset -1px -1px #D4D0C8;"><div style="position:absolute;left:0;right:0;top:2px;line-height:13px;text-align:right;padding-right:1px;letter-spacing:0.4px;white-space:nowrap">14.50</div></div>
<div style="left:476px;top:187px;width:46px;height:15px;background:#fff;box-shadow:inset -1px -1px #D4D0C8;"><div style="position:absolute;left:0;right:0;top:2px;line-height:13px;text-align:right;padding-right:1px;letter-spacing:0.4px;white-space:nowrap">14.50</div></div>
<div style="left:522px;top:187px;width:46px;height:15px;background:#fff;box-shadow:inset -1px -1px #D4D0C8;"><div style="position:absolute;left:0;right:0;top:2px;line-height:13px;text-align:right;padding-right:1px;letter-spacing:0.4px;white-space:nowrap">14.50</div></div>
<div style="left:568px;top:187px;width:46px;height:15px;background:#fff;box-shadow:inset -1px -1px #D4D0C8;"><div style="position:absolute;left:0;right:0;top:2px;line-height:13px;text-align:right;padding-right:1px;letter-spacing:0.4px;white-space:nowrap">14.30</div></div>
<div style="left:614px;top:187px;width:46px;height:15px;background:#fff;box-shadow:inset -1px -1px #D4D0C8;"><div style="position:absolute;left:0;right:0;top:2px;line-height:13px;text-align:right;padding-right:1px;letter-spacing:0.4px;white-space:nowrap">14.00</div></div>
<div style="left:660px;top:187px;width:46px;height:15px;background:#fff;box-shadow:inset -1px -1px #D4D0C8;"><div style="position:absolute;left:0;right:0;top:2px;line-height:13px;text-align:right;padding-right:1px;letter-spacing:0.4px;white-space:nowrap">13.80</div></div>
<div style="left:706px;top:187px;width:46px;height:15px;background:#fff;box-shadow:inset -1px -1px #D4D0C8;"><div style="position:absolute;left:0;right:0;top:2px;line-height:13px;text-align:right;padding-right:1px;letter-spacing:0.4px;white-space:nowrap">13.40</div></div>
<div style="left:292px;top:201px;width:46px;height:15px;background:#D4D0C8;box-shadow:inset 1px 1px #fff,inset -1px -1px #808080;"><div style="position:absolute;left:0;right:0;top:3px;line-height:13px;text-align:right;padding-right:3px;letter-spacing:0.4px;white-space:nowrap">68</div></div>
<div style="left:338px;top:202px;width:46px;height:15px;background:#fff;box-shadow:inset -1px -1px #D4D0C8;"><div style="position:absolute;left:0;right:0;top:2px;line-height:13px;text-align:right;padding-right:1px;letter-spacing:0.4px;white-space:nowrap">15.00</div></div>
<div style="left:384px;top:202px;width:46px;height:15px;background:#fff;box-shadow:inset -1px -1px #D4D0C8;"><div style="position:absolute;left:0;right:0;top:2px;line-height:13px;text-align:right;padding-right:1px;letter-spacing:0.4px;white-space:nowrap">15.00</div></div>
<div style="left:430px;top:202px;width:46px;height:15px;background:#fff;box-shadow:inset -1px -1px #D4D0C8;"><div style="position:absolute;left:0;right:0;top:2px;line-height:13px;text-align:right;padding-right:1px;letter-spacing:0.4px;white-space:nowrap">14.50</div></div>
<div style="left:476px;top:202px;width:46px;height:15px;background:#fff;box-shadow:inset -1px -1px #D4D0C8;"><div style="position:absolute;left:0;right:0;top:2px;line-height:13px;text-align:right;padding-right:1px;letter-spacing:0.4px;white-space:nowrap">14.50</div></div>
<div style="left:522px;top:202px;width:46px;height:15px;background:#fff;box-shadow:inset -1px -1px #D4D0C8;"><div style="position:absolute;left:0;right:0;top:2px;line-height:13px;text-align:right;padding-right:1px;letter-spacing:0.4px;white-space:nowrap">14.50</div></div>
<div style="left:568px;top:202px;width:46px;height:15px;background:#fff;box-shadow:inset -1px -1px #D4D0C8;"><div style="position:absolute;left:0;right:0;top:2px;line-height:13px;text-align:right;padding-right:1px;letter-spacing:0.4px;white-space:nowrap">14.30</div></div>
<div style="left:614px;top:202px;width:46px;height:15px;background:#fff;box-shadow:inset -1px -1px #D4D0C8;"><div style="position:absolute;left:0;right:0;top:2px;line-height:13px;text-align:right;padding-right:1px;letter-spacing:0.4px;white-space:nowrap">14.00</div></div>
<div style="left:660px;top:202px;width:46px;height:15px;background:#fff;box-shadow:inset -1px -1px #D4D0C8;"><div style="position:absolute;left:0;right:0;top:2px;line-height:13px;text-align:right;padding-right:1px;letter-spacing:0.4px;white-space:nowrap">13.80</div></div>
<div style="left:706px;top:202px;width:46px;height:15px;background:#fff;box-shadow:inset -1px -1px #D4D0C8;"><div style="position:absolute;left:0;right:0;top:2px;line-height:13px;text-align:right;padding-right:1px;letter-spacing:0.4px;white-space:nowrap">13.40</div></div>
<div style="left:292px;top:216px;width:46px;height:15px;background:#D4D0C8;box-shadow:inset 1px 1px #fff,inset -1px -1px #808080;"><div style="position:absolute;left:0;right:0;top:3px;line-height:13px;text-align:right;padding-right:3px;letter-spacing:0.4px;white-space:nowrap">56</div></div>
<div style="left:338px;top:217px;width:46px;height:15px;background:#fff;box-shadow:inset -1px -1px #D4D0C8;"><div style="position:absolute;left:0;right:0;top:2px;line-height:13px;text-align:right;padding-right:1px;letter-spacing:0.4px;white-space:nowrap">14.80</div></div>
<div style="left:384px;top:217px;width:46px;height:15px;background:#fff;box-shadow:inset -1px -1px #D4D0C8;"><div style="position:absolute;left:0;right:0;top:2px;line-height:13px;text-align:right;padding-right:1px;letter-spacing:0.4px;white-space:nowrap">14.70</div></div>
<div style="left:430px;top:217px;width:46px;height:15px;background:#fff;box-shadow:inset -1px -1px #D4D0C8;"><div style="position:absolute;left:0;right:0;top:2px;line-height:13px;text-align:right;padding-right:1px;letter-spacing:0.4px;white-space:nowrap">14.40</div></div>
<div style="left:476px;top:217px;width:46px;height:15px;background:#fff;box-shadow:inset -1px -1px #D4D0C8;"><div style="position:absolute;left:0;right:0;top:2px;line-height:13px;text-align:right;padding-right:1px;letter-spacing:0.4px;white-space:nowrap">14.40</div></div>
<div style="left:522px;top:217px;width:46px;height:15px;background:#fff;box-shadow:inset -1px -1px #D4D0C8;"><div style="position:absolute;left:0;right:0;top:2px;line-height:13px;text-align:right;padding-right:1px;letter-spacing:0.4px;white-space:nowrap">14.00</div></div>
<div style="left:568px;top:217px;width:46px;height:15px;background:#fff;box-shadow:inset -1px -1px #D4D0C8;"><div style="position:absolute;left:0;right:0;top:2px;line-height:13px;text-align:right;padding-right:1px;letter-spacing:0.4px;white-space:nowrap">13.80</div></div>
<div style="left:614px;top:217px;width:46px;height:15px;background:#fff;box-shadow:inset -1px -1px #D4D0C8;"><div style="position:absolute;left:0;right:0;top:2px;line-height:13px;text-align:right;padding-right:1px;letter-spacing:0.4px;white-space:nowrap">13.60</div></div>
<div style="left:660px;top:217px;width:46px;height:15px;background:#fff;box-shadow:inset -1px -1px #D4D0C8;"><div style="position:absolute;left:0;right:0;top:2px;line-height:13px;text-align:right;padding-right:1px;letter-spacing:0.4px;white-space:nowrap">13.20</div></div>
<div style="left:706px;top:217px;width:46px;height:15px;background:#fff;box-shadow:inset -1px -1px #D4D0C8;"><div style="position:absolute;left:0;right:0;top:2px;line-height:13px;text-align:right;padding-right:1px;letter-spacing:0.4px;white-space:nowrap">13.00</div></div>
<div style="left:292px;top:231px;width:46px;height:15px;background:#D4D0C8;box-shadow:inset 1px 1px #fff,inset -1px -1px #808080;"><div style="position:absolute;left:0;right:0;top:3px;line-height:13px;text-align:right;padding-right:3px;letter-spacing:0.4px;white-space:nowrap">44</div></div>
<div style="left:338px;top:232px;width:46px;height:15px;background:#fff;box-shadow:inset -1px -1px #D4D0C8;"><div style="position:absolute;left:0;right:0;top:2px;line-height:13px;text-align:right;padding-right:1px;letter-spacing:0.4px;white-space:nowrap">15.10</div></div>
<div style="left:384px;top:232px;width:46px;height:15px;background:#fff;box-shadow:inset -1px -1px #D4D0C8;"><div style="position:absolute;left:0;right:0;top:2px;line-height:13px;text-align:right;padding-right:1px;letter-spacing:0.4px;white-space:nowrap">14.90</div></div>
<div style="left:430px;top:232px;width:46px;height:15px;background:#fff;box-shadow:inset -1px -1px #D4D0C8;"><div style="position:absolute;left:0;right:0;top:2px;line-height:13px;text-align:right;padding-right:1px;letter-spacing:0.4px;white-space:nowrap">14.70</div></div>
<div style="left:476px;top:232px;width:46px;height:15px;background:#fff;box-shadow:inset -1px -1px #D4D0C8;"><div style="position:absolute;left:0;right:0;top:2px;line-height:13px;text-align:right;padding-right:1px;letter-spacing:0.4px;white-space:nowrap">14.60</div></div>
<div style="left:522px;top:232px;width:46px;height:15px;background:#fff;box-shadow:inset -1px -1px #D4D0C8;"><div style="position:absolute;left:0;right:0;top:2px;line-height:13px;text-align:right;padding-right:1px;letter-spacing:0.4px;white-space:nowrap">14.30</div></div>
<div style="left:568px;top:232px;width:46px;height:15px;background:#fff;box-shadow:inset -1px -1px #D4D0C8;"><div style="position:absolute;left:0;right:0;top:2px;line-height:13px;text-align:right;padding-right:1px;letter-spacing:0.4px;white-space:nowrap">14.10</div></div>
<div style="left:614px;top:232px;width:46px;height:15px;background:#fff;box-shadow:inset -1px -1px #D4D0C8;"><div style="position:absolute;left:0;right:0;top:2px;line-height:13px;text-align:right;padding-right:1px;letter-spacing:0.4px;white-space:nowrap">13.50</div></div>
<div style="left:660px;top:232px;width:46px;height:15px;background:#fff;box-shadow:inset -1px -1px #D4D0C8;"><div style="position:absolute;left:0;right:0;top:2px;line-height:13px;text-align:right;padding-right:1px;letter-spacing:0.4px;white-space:nowrap">13.00</div></div>
<div style="left:706px;top:232px;width:46px;height:15px;background:#fff;box-shadow:inset -1px -1px #D4D0C8;"><div style="position:absolute;left:0;right:0;top:2px;line-height:13px;text-align:right;padding-right:1px;letter-spacing:0.4px;white-space:nowrap">12.70</div></div>
<div style="left:292px;top:246px;width:46px;height:15px;background:#D4D0C8;box-shadow:inset 1px 1px #fff,inset -1px -1px #808080;"><div style="position:absolute;left:0;right:0;top:3px;line-height:13px;text-align:right;padding-right:3px;letter-spacing:0.4px;white-space:nowrap">32</div></div>
<div style="left:338px;top:247px;width:46px;height:15px;background:#fff;box-shadow:inset -1px -1px #D4D0C8;"><div style="position:absolute;left:0;right:0;top:2px;line-height:13px;text-align:right;padding-right:1px;letter-spacing:0.4px;white-space:nowrap">14.60</div></div>
<div style="left:384px;top:247px;width:46px;height:15px;background:#fff;box-shadow:inset -1px -1px #D4D0C8;"><div style="position:absolute;left:0;right:0;top:2px;line-height:13px;text-align:right;padding-right:1px;letter-spacing:0.4px;white-space:nowrap">14.50</div></div>
<div style="left:430px;top:247px;width:46px;height:15px;background:#fff;box-shadow:inset -1px -1px #D4D0C8;"><div style="position:absolute;left:0;right:0;top:2px;line-height:13px;text-align:right;padding-right:1px;letter-spacing:0.4px;white-space:nowrap">14.30</div></div>
<div style="left:476px;top:247px;width:46px;height:15px;background:#fff;box-shadow:inset -1px -1px #D4D0C8;"><div style="position:absolute;left:0;right:0;top:2px;line-height:13px;text-align:right;padding-right:1px;letter-spacing:0.4px;white-space:nowrap">14.00</div></div>
<div style="left:522px;top:247px;width:46px;height:15px;background:#fff;box-shadow:inset -1px -1px #D4D0C8;"><div style="position:absolute;left:0;right:0;top:2px;line-height:13px;text-align:right;padding-right:1px;letter-spacing:0.4px;white-space:nowrap">13.70</div></div>
<div style="left:568px;top:247px;width:46px;height:15px;background:#fff;box-shadow:inset -1px -1px #D4D0C8;"><div style="position:absolute;left:0;right:0;top:2px;line-height:13px;text-align:right;padding-right:1px;letter-spacing:0.4px;white-space:nowrap">13.40</div></div>
<div style="left:614px;top:247px;width:46px;height:15px;background:#fff;box-shadow:inset -1px -1px #D4D0C8;"><div style="position:absolute;left:0;right:0;top:2px;line-height:13px;text-align:right;padding-right:1px;letter-spacing:0.4px;white-space:nowrap">13.00</div></div>
<div style="left:660px;top:247px;width:46px;height:15px;background:#fff;box-shadow:inset -1px -1px #D4D0C8;"><div style="position:absolute;left:0;right:0;top:2px;line-height:13px;text-align:right;padding-right:1px;letter-spacing:0.4px;white-space:nowrap">12.50</div></div>
<div style="left:706px;top:247px;width:46px;height:15px;background:#fff;box-shadow:inset -1px -1px #D4D0C8;"><div style="position:absolute;left:0;right:0;top:2px;line-height:13px;text-align:right;padding-right:1px;letter-spacing:0.4px;white-space:nowrap">12.20</div></div>
<div style="left:292px;top:261px;width:46px;height:15px;background:#D4D0C8;box-shadow:inset 1px 1px #fff,inset -1px -1px #808080;"><div style="position:absolute;left:0;right:0;top:3px;line-height:13px;text-align:right;padding-right:3px;letter-spacing:0.4px;white-space:nowrap">20</div></div>
<div style="left:338px;top:262px;width:46px;height:15px;background:#fff;box-shadow:inset -1px -1px #D4D0C8;"><div style="position:absolute;left:0;right:0;top:2px;line-height:13px;text-align:right;padding-right:1px;letter-spacing:0.4px;white-space:nowrap">13.90</div></div>
<div style="left:384px;top:262px;width:46px;height:15px;background:#fff;box-shadow:inset -1px -1px #D4D0C8;"><div style="position:absolute;left:0;right:0;top:2px;line-height:13px;text-align:right;padding-right:1px;letter-spacing:0.4px;white-space:nowrap">13.80</div></div>
<div style="left:430px;top:262px;width:46px;height:15px;background:#fff;box-shadow:inset -1px -1px #D4D0C8;"><div style="position:absolute;left:0;right:0;top:2px;line-height:13px;text-align:right;padding-right:1px;letter-spacing:0.4px;white-space:nowrap">13.60</div></div>
<div style="left:476px;top:262px;width:46px;height:15px;background:#fff;box-shadow:inset -1px -1px #D4D0C8;"><div style="position:absolute;left:0;right:0;top:2px;line-height:13px;text-align:right;padding-right:1px;letter-spacing:0.4px;white-space:nowrap">13.40</div></div>
<div style="left:522px;top:262px;width:46px;height:15px;background:#fff;box-shadow:inset -1px -1px #D4D0C8;"><div style="position:absolute;left:0;right:0;top:2px;line-height:13px;text-align:right;padding-right:1px;letter-spacing:0.4px;white-space:nowrap">13.20</div></div>
<div style="left:568px;top:262px;width:46px;height:15px;background:#fff;box-shadow:inset -1px -1px #D4D0C8;"><div style="position:absolute;left:0;right:0;top:2px;line-height:13px;text-align:right;padding-right:1px;letter-spacing:0.4px;white-space:nowrap">12.90</div></div>
<div style="left:614px;top:262px;width:46px;height:15px;background:#fff;box-shadow:inset -1px -1px #D4D0C8;"><div style="position:absolute;left:0;right:0;top:2px;line-height:13px;text-align:right;padding-right:1px;letter-spacing:0.4px;white-space:nowrap">12.50</div></div>
<div style="left:660px;top:262px;width:46px;height:15px;background:#fff;box-shadow:inset -1px -1px #D4D0C8;"><div style="position:absolute;left:0;right:0;top:2px;line-height:13px;text-align:right;padding-right:1px;letter-spacing:0.4px;white-space:nowrap">12.20</div></div>
<div style="left:706px;top:262px;width:46px;height:15px;background:#fff;box-shadow:inset -1px -1px #D4D0C8;"><div style="position:absolute;left:0;right:0;top:2px;line-height:13px;text-align:right;padding-right:1px;letter-spacing:0.4px;white-space:nowrap">11.90</div></div>
<div style="left:292px;top:276px;width:46px;height:15px;background:#D4D0C8;box-shadow:inset 1px 1px #fff,inset -1px -1px #808080;"><div style="position:absolute;left:0;right:0;top:3px;line-height:13px;text-align:right;padding-right:3px;letter-spacing:0.4px;white-space:nowrap">8</div></div>
<div style="left:338px;top:277px;width:46px;height:15px;background:#fff;box-shadow:inset -1px -1px #D4D0C8;"><div style="position:absolute;left:0;right:0;top:2px;line-height:13px;text-align:right;padding-right:1px;letter-spacing:0.4px;white-space:nowrap">13.10</div></div>
<div style="left:384px;top:277px;width:46px;height:15px;background:#fff;box-shadow:inset -1px -1px #D4D0C8;"><div style="position:absolute;left:0;right:0;top:2px;line-height:13px;text-align:right;padding-right:1px;letter-spacing:0.4px;white-space:nowrap">13.00</div></div>
<div style="left:430px;top:277px;width:46px;height:15px;background:#fff;box-shadow:inset -1px -1px #D4D0C8;"><div style="position:absolute;left:0;right:0;top:2px;line-height:13px;text-align:right;padding-right:1px;letter-spacing:0.4px;white-space:nowrap">12.90</div></div>
<div style="left:476px;top:277px;width:46px;height:15px;background:#fff;box-shadow:inset -1px -1px #D4D0C8;"><div style="position:absolute;left:0;right:0;top:2px;line-height:13px;text-align:right;padding-right:1px;letter-spacing:0.4px;white-space:nowrap">12.70</div></div>
<div style="left:522px;top:277px;width:46px;height:15px;background:#fff;box-shadow:inset -1px -1px #D4D0C8;"><div style="position:absolute;left:0;right:0;top:2px;line-height:13px;text-align:right;padding-right:1px;letter-spacing:0.4px;white-space:nowrap">12.50</div></div>
<div style="left:568px;top:277px;width:46px;height:15px;background:#fff;box-shadow:inset -1px -1px #D4D0C8;"><div style="position:absolute;left:0;right:0;top:2px;line-height:13px;text-align:right;padding-right:1px;letter-spacing:0.4px;white-space:nowrap">12.30</div></div>
<div style="left:614px;top:277px;width:46px;height:15px;background:#fff;box-shadow:inset -1px -1px #D4D0C8;"><div style="position:absolute;left:0;right:0;top:2px;line-height:13px;text-align:right;padding-right:1px;letter-spacing:0.4px;white-space:nowrap">12.00</div></div>
<div style="left:660px;top:277px;width:46px;height:15px;background:#fff;box-shadow:inset -1px -1px #D4D0C8;"><div style="position:absolute;left:0;right:0;top:2px;line-height:13px;text-align:right;padding-right:1px;letter-spacing:0.4px;white-space:nowrap">11.80</div></div>
<div style="left:706px;top:277px;width:46px;height:15px;background:#fff;box-shadow:inset -1px -1px #D4D0C8;"><div style="position:absolute;left:0;right:0;top:2px;line-height:13px;text-align:right;padding-right:1px;letter-spacing:0.4px;white-space:nowrap">11.50</div></div>
<div style="left:292px;top:291px;width:46px;height:15px;background:#D4D0C8;box-shadow:inset 1px 1px #fff,inset -1px -1px #808080;"><div style="position:absolute;left:0;right:0;top:3px;line-height:13px;text-align:right;padding-right:3px;letter-spacing:0.4px;white-space:nowrap">-4</div></div>
<div style="left:338px;top:292px;width:46px;height:15px;background:#fff;box-shadow:inset -1px -1px #D4D0C8;"><div style="position:absolute;left:0;right:0;top:2px;line-height:13px;text-align:right;padding-right:1px;letter-spacing:0.4px;white-space:nowrap">12.40</div></div>
<div style="left:384px;top:292px;width:46px;height:15px;background:#fff;box-shadow:inset -1px -1px #D4D0C8;"><div style="position:absolute;left:0;right:0;top:2px;line-height:13px;text-align:right;padding-right:1px;letter-spacing:0.4px;white-space:nowrap">12.30</div></div>
<div style="left:430px;top:292px;width:46px;height:15px;background:#fff;box-shadow:inset -1px -1px #D4D0C8;"><div style="position:absolute;left:0;right:0;top:2px;line-height:13px;text-align:right;padding-right:1px;letter-spacing:0.4px;white-space:nowrap">12.20</div></div>
<div style="left:476px;top:292px;width:46px;height:15px;background:#fff;box-shadow:inset -1px -1px #D4D0C8;"><div style="position:absolute;left:0;right:0;top:2px;line-height:13px;text-align:right;padding-right:1px;letter-spacing:0.4px;white-space:nowrap">12.10</div></div>
<div style="left:522px;top:292px;width:46px;height:15px;background:#fff;box-shadow:inset -1px -1px #D4D0C8;"><div style="position:absolute;left:0;right:0;top:2px;line-height:13px;text-align:right;padding-right:1px;letter-spacing:0.4px;white-space:nowrap">12.00</div></div>
<div style="left:568px;top:292px;width:46px;height:15px;background:#fff;box-shadow:inset -1px -1px #D4D0C8;"><div style="position:absolute;left:0;right:0;top:2px;line-height:13px;text-align:right;padding-right:1px;letter-spacing:0.4px;white-space:nowrap">11.80</div></div>
<div style="left:614px;top:292px;width:46px;height:15px;background:#fff;box-shadow:inset -1px -1px #D4D0C8;"><div style="position:absolute;left:0;right:0;top:2px;line-height:13px;text-align:right;padding-right:1px;letter-spacing:0.4px;white-space:nowrap">11.60</div></div>
<div style="left:660px;top:292px;width:46px;height:15px;background:#fff;box-shadow:inset -1px -1px #D4D0C8;"><div style="position:absolute;left:0;right:0;top:2px;line-height:13px;text-align:right;padding-right:1px;letter-spacing:0.4px;white-space:nowrap">11.40</div></div>
<div style="left:706px;top:292px;width:46px;height:15px;background:#fff;box-shadow:inset -1px -1px #D4D0C8;"><div style="position:absolute;left:0;right:0;top:2px;line-height:13px;text-align:right;padding-right:1px;letter-spacing:0.4px;white-space:nowrap">11.10</div></div>
<div style="left:292px;top:306px;width:46px;height:15px;background:#D4D0C8;box-shadow:inset 1px 1px #fff,inset -1px -1px #808080;"><div style="position:absolute;left:0;right:0;top:3px;line-height:13px;text-align:right;padding-right:3px;letter-spacing:0.4px;white-space:nowrap">-16</div></div>
<div style="left:338px;top:307px;width:46px;height:15px;background:#fff;box-shadow:inset -1px -1px #D4D0C8;"><div style="position:absolute;left:0;right:0;top:2px;line-height:13px;text-align:right;padding-right:1px;letter-spacing:0.4px;white-space:nowrap">12.00</div></div>
<div style="left:384px;top:307px;width:46px;height:15px;background:#fff;box-shadow:inset -1px -1px #D4D0C8;"><div style="position:absolute;left:0;right:0;top:2px;line-height:13px;text-align:right;padding-right:1px;letter-spacing:0.4px;white-space:nowrap">11.90</div></div>
<div style="left:430px;top:307px;width:46px;height:15px;background:#fff;box-shadow:inset -1px -1px #D4D0C8;"><div style="position:absolute;left:0;right:0;top:2px;line-height:13px;text-align:right;padding-right:1px;letter-spacing:0.4px;white-space:nowrap">11.80</div></div>
<div style="left:476px;top:307px;width:46px;height:15px;background:#fff;box-shadow:inset -1px -1px #D4D0C8;"><div style="position:absolute;left:0;right:0;top:2px;line-height:13px;text-align:right;padding-right:1px;letter-spacing:0.4px;white-space:nowrap">11.70</div></div>
<div style="left:522px;top:307px;width:46px;height:15px;background:#fff;box-shadow:inset -1px -1px #D4D0C8;"><div style="position:absolute;left:0;right:0;top:2px;line-height:13px;text-align:right;padding-right:1px;letter-spacing:0.4px;white-space:nowrap">11.60</div></div>
<div style="left:568px;top:307px;width:46px;height:15px;background:#fff;box-shadow:inset -1px -1px #D4D0C8;"><div style="position:absolute;left:0;right:0;top:2px;line-height:13px;text-align:right;padding-right:1px;letter-spacing:0.4px;white-space:nowrap">11.40</div></div>
<div style="left:614px;top:307px;width:46px;height:15px;background:#fff;box-shadow:inset -1px -1px #D4D0C8;"><div style="position:absolute;left:0;right:0;top:2px;line-height:13px;text-align:right;padding-right:1px;letter-spacing:0.4px;white-space:nowrap">11.20</div></div>
<div style="left:660px;top:307px;width:46px;height:15px;background:#fff;box-shadow:inset -1px -1px #D4D0C8;"><div style="position:absolute;left:0;right:0;top:2px;line-height:13px;text-align:right;padding-right:1px;letter-spacing:0.4px;white-space:nowrap">11.00</div></div>
<div style="left:706px;top:307px;width:46px;height:15px;background:#fff;box-shadow:inset -1px -1px #D4D0C8;"><div style="position:absolute;left:0;right:0;top:2px;line-height:13px;text-align:right;padding-right:1px;letter-spacing:0.4px;white-space:nowrap">10.80</div></div>
<div style="left:292px;top:321px;width:46px;height:15px;background:#D4D0C8;box-shadow:inset 1px 1px #fff,inset -1px -1px #808080;"><div style="position:absolute;left:0;right:0;top:3px;line-height:13px;text-align:right;padding-right:3px;letter-spacing:0.4px;white-space:nowrap">-28</div></div>
<div style="left:338px;top:322px;width:46px;height:15px;background:#fff;box-shadow:inset -1px -1px #D4D0C8;"><div style="position:absolute;left:0;right:0;top:2px;line-height:13px;text-align:right;padding-right:1px;letter-spacing:0.4px;white-space:nowrap">11.60</div></div>
<div style="left:384px;top:322px;width:46px;height:15px;background:#fff;box-shadow:inset -1px -1px #D4D0C8;"><div style="position:absolute;left:0;right:0;top:2px;line-height:13px;text-align:right;padding-right:1px;letter-spacing:0.4px;white-space:nowrap">11.50</div></div>
<div style="left:430px;top:322px;width:46px;height:15px;background:#fff;box-shadow:inset -1px -1px #D4D0C8;"><div style="position:absolute;left:0;right:0;top:2px;line-height:13px;text-align:right;padding-right:1px;letter-spacing:0.4px;white-space:nowrap">11.40</div></div>
<div style="left:476px;top:322px;width:46px;height:15px;background:#fff;box-shadow:inset -1px -1px #D4D0C8;"><div style="position:absolute;left:0;right:0;top:2px;line-height:13px;text-align:right;padding-right:1px;letter-spacing:0.4px;white-space:nowrap">11.30</div></div>
<div style="left:522px;top:322px;width:46px;height:15px;background:#fff;box-shadow:inset -1px -1px #D4D0C8;"><div style="position:absolute;left:0;right:0;top:2px;line-height:13px;text-align:right;padding-right:1px;letter-spacing:0.4px;white-space:nowrap">11.20</div></div>
<div style="left:568px;top:322px;width:46px;height:15px;background:#fff;box-shadow:inset -1px -1px #D4D0C8;"><div style="position:absolute;left:0;right:0;top:2px;line-height:13px;text-align:right;padding-right:1px;letter-spacing:0.4px;white-space:nowrap">11.00</div></div>
<div style="left:614px;top:322px;width:46px;height:15px;background:#fff;box-shadow:inset -1px -1px #D4D0C8;"><div style="position:absolute;left:0;right:0;top:2px;line-height:13px;text-align:right;padding-right:1px;letter-spacing:0.4px;white-space:nowrap">10.90</div></div>
<div style="left:660px;top:322px;width:46px;height:15px;background:#fff;box-shadow:inset -1px -1px #D4D0C8;"><div style="position:absolute;left:0;right:0;top:2px;line-height:13px;text-align:right;padding-right:1px;letter-spacing:0.4px;white-space:nowrap">10.70</div></div>
<div style="left:706px;top:322px;width:46px;height:15px;background:#fff;box-shadow:inset -1px -1px #D4D0C8;"><div style="position:absolute;left:0;right:0;top:2px;line-height:13px;text-align:right;padding-right:1px;letter-spacing:0.4px;white-space:nowrap">10.60</div></div>
<div style="left:292px;top:336px;width:46px;height:15px;background:#D4D0C8;box-shadow:inset 1px 1px #fff,inset -1px -1px #808080;"><div style="position:absolute;left:0;right:0;top:3px;line-height:13px;text-align:right;padding-right:3px;letter-spacing:0.4px;white-space:nowrap">-40</div></div>
<div style="left:338px;top:337px;width:46px;height:15px;background:#fff;box-shadow:inset -1px -1px #D4D0C8;"><div style="position:absolute;left:0;right:0;top:2px;line-height:13px;text-align:right;padding-right:1px;letter-spacing:0.4px;white-space:nowrap">11.60</div></div>
<div style="left:384px;top:337px;width:46px;height:15px;background:#fff;box-shadow:inset -1px -1px #D4D0C8;"><div style="position:absolute;left:0;right:0;top:2px;line-height:13px;text-align:right;padding-right:1px;letter-spacing:0.4px;white-space:nowrap">11.50</div></div>
<div style="left:430px;top:337px;width:46px;height:15px;background:#fff;box-shadow:inset -1px -1px #D4D0C8;"><div style="position:absolute;left:0;right:0;top:2px;line-height:13px;text-align:right;padding-right:1px;letter-spacing:0.4px;white-space:nowrap">11.40</div></div>
<div style="left:476px;top:337px;width:46px;height:15px;background:#fff;box-shadow:inset -1px -1px #D4D0C8;"><div style="position:absolute;left:0;right:0;top:2px;line-height:13px;text-align:right;padding-right:1px;letter-spacing:0.4px;white-space:nowrap">11.30</div></div>
<div style="left:522px;top:337px;width:46px;height:15px;background:#fff;box-shadow:inset -1px -1px #D4D0C8;"><div style="position:absolute;left:0;right:0;top:2px;line-height:13px;text-align:right;padding-right:1px;letter-spacing:0.4px;white-space:nowrap">11.20</div></div>
<div style="left:568px;top:337px;width:46px;height:15px;background:#fff;box-shadow:inset -1px -1px #D4D0C8;"><div style="position:absolute;left:0;right:0;top:2px;line-height:13px;text-align:right;padding-right:1px;letter-spacing:0.4px;white-space:nowrap">11.00</div></div>
<div style="left:614px;top:337px;width:46px;height:15px;background:#fff;box-shadow:inset -1px -1px #D4D0C8;"><div style="position:absolute;left:0;right:0;top:2px;line-height:13px;text-align:right;padding-right:1px;letter-spacing:0.4px;white-space:nowrap">10.90</div></div>
<div style="left:660px;top:337px;width:46px;height:15px;background:#fff;box-shadow:inset -1px -1px #D4D0C8;"><div style="position:absolute;left:0;right:0;top:2px;line-height:13px;text-align:right;padding-right:1px;letter-spacing:0.4px;white-space:nowrap">10.70</div></div>
<div style="left:706px;top:337px;width:46px;height:15px;background:#fff;box-shadow:inset -1px -1px #D4D0C8;"><div style="position:absolute;left:0;right:0;top:2px;line-height:13px;text-align:right;padding-right:1px;letter-spacing:0.4px;white-space:nowrap">10.60</div></div>
<div style="left:462px;top:357px;width:116px;height:22px;background:#D4D0C8;box-shadow:inset -1px -1px #404040,inset 1px 1px #fff,inset -2px -2px #808080,inset 2px 2px #D4D0C8;"><div style="position:absolute;left:0;right:0;top:5px;text-align:center;line-height:13px">View Graph</div></div>
<div style="left:462px;top:382px;width:56px;height:22px;background:#D4D0C8;box-shadow:inset -1px -1px #404040,inset 1px 1px #fff,inset -2px -2px #808080,inset 2px 2px #D4D0C8;"><div style="position:absolute;left:0;right:0;top:5px;text-align:center;line-height:13px">Toolbox</div></div>
<div style="left:520px;top:382px;width:56px;height:22px;background:#D4D0C8;box-shadow:inset -1px -1px #404040,inset 1px 1px #fff,inset -2px -2px #808080,inset 2px 2px #D4D0C8;"><div style="position:absolute;left:0;right:0;top:5px;text-align:center;line-height:13px">Compare</div></div>
<div style="left:462px;top:407px;width:56px;height:23px;background:#D4D0C8;box-shadow:inset -1px -1px #000,inset 1px 1px #000,inset -2px -2px #404040,inset 2px 2px #fff,inset -3px -3px #808080;"><div style="position:absolute;left:0;right:0;top:5px;text-align:center;line-height:13px">Save</div></div>
<div style="left:520px;top:407px;width:56px;height:23px;background:#D4D0C8;box-shadow:inset -1px -1px #404040,inset 1px 1px #fff,inset -2px -2px #808080,inset 2px 2px #D4D0C8;"><div style="position:absolute;left:0;right:0;top:5px;text-align:center;line-height:13px">Cancel</div></div>
<div style="left:769px;top:92px;width:179px;height:348px;background:#D4D0C8;box-shadow:inset -1px -1px #404040,inset 1px 1px #D4D0C8,inset 2px 2px #fff;"></div>
<div style="left:772px;top:95px;width:173px;height:18px;background:linear-gradient(to right,#808080,#C0C0C0)"></div>
<svg style="position:absolute;left:774px;top:97px" width="17" height="13" viewBox="0 0 17 13"><rect x="1.0" y="0.5" width="1.2" height="2.5" fill="#000"/><rect x="1.0" y="10.5" width="1.2" height="2.5" fill="#000"/><rect x="4.0" y="0.5" width="1.2" height="2.5" fill="#000"/><rect x="4.0" y="10.5" width="1.2" height="2.5" fill="#000"/><rect x="7.0" y="0.5" width="1.2" height="2.5" fill="#000"/><rect x="7.0" y="10.5" width="1.2" height="2.5" fill="#000"/><rect x="10.0" y="0.5" width="1.2" height="2.5" fill="#000"/><rect x="10.0" y="10.5" width="1.2" height="2.5" fill="#000"/><rect x="13.0" y="0.5" width="1.2" height="2.5" fill="#000"/><rect x="13.0" y="10.5" width="1.2" height="2.5" fill="#000"/><rect x="0" y="3.5" width="15.5" height="7" fill="#000"/></svg>
<div style="left:791px;top:97px;white-space:nowrap;color:#D4D0C8;font-weight:bold;font-size:11px;line-height:14px;letter-spacing:0.15px">Closed Throttle Open ...</div>
<div style="left:927px;top:97px;width:16px;height:14px;background:#D4D0C8;box-shadow:inset -1px -1px #404040,inset 1px 1px #fff,inset -2px -2px #808080,inset 2px 2px #D4D0C8;"><svg style="position:absolute;left:4px;top:3px" width="8" height="7" viewBox="0 0 8 7"><path d="M0.5 0.5L7.5 6.5M7.5 0.5L0.5 6.5" stroke="#000" stroke-width="1.6"/></svg></div>
<div style="left:783px;top:114px;width:154px;height:243px;background:#fff;box-shadow:inset 1px 1px #808080,inset -1px -1px #fff,inset 2px 2px #404040,inset -2px -2px #D4D0C8;"></div>
<div style="left:785px;top:117px;width:150px;height:13px;background:#D4D0C8;box-shadow:inset 1px 1px #fff,inset -1px -1px #808080;"><div style="position:absolute;left:0;right:0;top:2px;line-height:13px;text-align:center;font-weight:bold;font-size:12px;white-space:nowrap"></div></div>
<div style="left:785px;top:130px;width:74px;height:15px;background:#D4D0C8;box-shadow:inset 1px 1px #fff,inset -1px -1px #808080;"><div style="position:absolute;left:0;right:0;top:3px;line-height:13px;text-align:center;white-space:nowrap">Deg. C</div></div>
<div style="left:859px;top:130px;width:76px;height:15px;background:#E0E0E0;box-shadow:inset 1px 1px #fff,inset -1px -1px #808080;"><div style="position:absolute;left:0;right:0;top:3px;line-height:13px;text-align:center;white-space:nowrap">AFR</div></div>
<div style="left:785px;top:145px;width:74px;height:15px;background:#E0E0E0;box-shadow:inset 1px 1px #fff,inset -1px -1px #808080;"><div style="position:absolute;left:0;right:0;top:3px;line-height:13px;text-align:right;padding-right:3px;letter-spacing:0.4px;white-space:nowrap">116</div></div>
<div style="left:859px;top:146px;width:76px;height:15px;background:#D8D8D8;box-shadow:inset 0 0 0 1px #202020;"><div style="position:absolute;left:0;right:0;top:2px;line-height:13px;text-align:right;padding-right:1px;letter-spacing:0.4px;white-space:nowrap">14.6</div></div>
<div style="left:785px;top:160px;width:74px;height:15px;background:#D4D0C8;box-shadow:inset 1px 1px #fff,inset -1px -1px #808080;"><div style="position:absolute;left:0;right:0;top:3px;line-height:13px;text-align:right;padding-right:3px;letter-spacing:0.4px;white-space:nowrap">104</div></div>
<div style="left:859px;top:161px;width:76px;height:15px;background:#fff;box-shadow:inset -1px -1px #D4D0C8;"><div style="position:absolute;left:0;right:0;top:2px;line-height:13px;text-align:right;padding-right:1px;letter-spacing:0.4px;white-space:nowrap">15.0</div></div>
<div style="left:785px;top:175px;width:74px;height:15px;background:#D4D0C8;box-shadow:inset 1px 1px #fff,inset -1px -1px #808080;"><div style="position:absolute;left:0;right:0;top:3px;line-height:13px;text-align:right;padding-right:3px;letter-spacing:0.4px;white-space:nowrap">92</div></div>
<div style="left:859px;top:176px;width:76px;height:15px;background:#fff;box-shadow:inset -1px -1px #D4D0C8;"><div style="position:absolute;left:0;right:0;top:2px;line-height:13px;text-align:right;padding-right:1px;letter-spacing:0.4px;white-space:nowrap">14.8</div></div>
<div style="left:785px;top:190px;width:74px;height:15px;background:#D4D0C8;box-shadow:inset 1px 1px #fff,inset -1px -1px #808080;"><div style="position:absolute;left:0;right:0;top:3px;line-height:13px;text-align:right;padding-right:3px;letter-spacing:0.4px;white-space:nowrap">80</div></div>
<div style="left:859px;top:191px;width:76px;height:15px;background:#fff;box-shadow:inset -1px -1px #D4D0C8;"><div style="position:absolute;left:0;right:0;top:2px;line-height:13px;text-align:right;padding-right:1px;letter-spacing:0.4px;white-space:nowrap">14.3</div></div>
<div style="left:785px;top:205px;width:74px;height:15px;background:#D4D0C8;box-shadow:inset 1px 1px #fff,inset -1px -1px #808080;"><div style="position:absolute;left:0;right:0;top:3px;line-height:13px;text-align:right;padding-right:3px;letter-spacing:0.4px;white-space:nowrap">68</div></div>
<div style="left:859px;top:206px;width:76px;height:15px;background:#fff;box-shadow:inset -1px -1px #D4D0C8;"><div style="position:absolute;left:0;right:0;top:2px;line-height:13px;text-align:right;padding-right:1px;letter-spacing:0.4px;white-space:nowrap">14.2</div></div>
<div style="left:785px;top:220px;width:74px;height:15px;background:#D4D0C8;box-shadow:inset 1px 1px #fff,inset -1px -1px #808080;"><div style="position:absolute;left:0;right:0;top:3px;line-height:13px;text-align:right;padding-right:3px;letter-spacing:0.4px;white-space:nowrap">56</div></div>
<div style="left:859px;top:221px;width:76px;height:15px;background:#fff;box-shadow:inset -1px -1px #D4D0C8;"><div style="position:absolute;left:0;right:0;top:2px;line-height:13px;text-align:right;padding-right:1px;letter-spacing:0.4px;white-space:nowrap">14.1</div></div>
<div style="left:785px;top:235px;width:74px;height:15px;background:#D4D0C8;box-shadow:inset 1px 1px #fff,inset -1px -1px #808080;"><div style="position:absolute;left:0;right:0;top:3px;line-height:13px;text-align:right;padding-right:3px;letter-spacing:0.4px;white-space:nowrap">44</div></div>
<div style="left:859px;top:236px;width:76px;height:15px;background:#fff;box-shadow:inset -1px -1px #D4D0C8;"><div style="position:absolute;left:0;right:0;top:2px;line-height:13px;text-align:right;padding-right:1px;letter-spacing:0.4px;white-space:nowrap">14.0</div></div>
<div style="left:785px;top:250px;width:74px;height:15px;background:#D4D0C8;box-shadow:inset 1px 1px #fff,inset -1px -1px #808080;"><div style="position:absolute;left:0;right:0;top:3px;line-height:13px;text-align:right;padding-right:3px;letter-spacing:0.4px;white-space:nowrap">32</div></div>
<div style="left:859px;top:251px;width:76px;height:15px;background:#fff;box-shadow:inset -1px -1px #D4D0C8;"><div style="position:absolute;left:0;right:0;top:2px;line-height:13px;text-align:right;padding-right:1px;letter-spacing:0.4px;white-space:nowrap">13.7</div></div>
<div style="left:785px;top:265px;width:74px;height:15px;background:#D4D0C8;box-shadow:inset 1px 1px #fff,inset -1px -1px #808080;"><div style="position:absolute;left:0;right:0;top:3px;line-height:13px;text-align:right;padding-right:3px;letter-spacing:0.4px;white-space:nowrap">20</div></div>
<div style="left:859px;top:266px;width:76px;height:15px;background:#fff;box-shadow:inset -1px -1px #D4D0C8;"><div style="position:absolute;left:0;right:0;top:2px;line-height:13px;text-align:right;padding-right:1px;letter-spacing:0.4px;white-space:nowrap">13.2</div></div>
<div style="left:785px;top:280px;width:74px;height:15px;background:#D4D0C8;box-shadow:inset 1px 1px #fff,inset -1px -1px #808080;"><div style="position:absolute;left:0;right:0;top:3px;line-height:13px;text-align:right;padding-right:3px;letter-spacing:0.4px;white-space:nowrap">8</div></div>
<div style="left:859px;top:281px;width:76px;height:15px;background:#fff;box-shadow:inset -1px -1px #D4D0C8;"><div style="position:absolute;left:0;right:0;top:2px;line-height:13px;text-align:right;padding-right:1px;letter-spacing:0.4px;white-space:nowrap">12.8</div></div>
<div style="left:785px;top:295px;width:74px;height:15px;background:#D4D0C8;box-shadow:inset 1px 1px #fff,inset -1px -1px #808080;"><div style="position:absolute;left:0;right:0;top:3px;line-height:13px;text-align:right;padding-right:3px;letter-spacing:0.4px;white-space:nowrap">-4</div></div>
<div style="left:859px;top:296px;width:76px;height:15px;background:#fff;box-shadow:inset -1px -1px #D4D0C8;"><div style="position:absolute;left:0;right:0;top:2px;line-height:13px;text-align:right;padding-right:1px;letter-spacing:0.4px;white-space:nowrap">12.6</div></div>
<div style="left:785px;top:310px;width:74px;height:15px;background:#D4D0C8;box-shadow:inset 1px 1px #fff,inset -1px -1px #808080;"><div style="position:absolute;left:0;right:0;top:3px;line-height:13px;text-align:right;padding-right:3px;letter-spacing:0.4px;white-space:nowrap">-16</div></div>
<div style="left:859px;top:311px;width:76px;height:15px;background:#fff;box-shadow:inset -1px -1px #D4D0C8;"><div style="position:absolute;left:0;right:0;top:2px;line-height:13px;text-align:right;padding-right:1px;letter-spacing:0.4px;white-space:nowrap">12.4</div></div>
<div style="left:785px;top:325px;width:74px;height:15px;background:#D4D0C8;box-shadow:inset 1px 1px #fff,inset -1px -1px #808080;"><div style="position:absolute;left:0;right:0;top:3px;line-height:13px;text-align:right;padding-right:3px;letter-spacing:0.4px;white-space:nowrap">-28</div></div>
<div style="left:859px;top:326px;width:76px;height:15px;background:#fff;box-shadow:inset -1px -1px #D4D0C8;"><div style="position:absolute;left:0;right:0;top:2px;line-height:13px;text-align:right;padding-right:1px;letter-spacing:0.4px;white-space:nowrap">12.0</div></div>
<div style="left:785px;top:340px;width:74px;height:15px;background:#D4D0C8;box-shadow:inset 1px 1px #fff,inset -1px -1px #808080;"><div style="position:absolute;left:0;right:0;top:3px;line-height:13px;text-align:right;padding-right:3px;letter-spacing:0.4px;white-space:nowrap">-40</div></div>
<div style="left:859px;top:341px;width:76px;height:15px;background:#fff;box-shadow:inset -1px -1px #D4D0C8;"><div style="position:absolute;left:0;right:0;top:2px;line-height:13px;text-align:right;padding-right:1px;letter-spacing:0.4px;white-space:nowrap">12.0</div></div>
<div style="left:800px;top:361px;width:116px;height:22px;background:#D4D0C8;box-shadow:inset -1px -1px #404040,inset 1px 1px #fff,inset -2px -2px #808080,inset 2px 2px #D4D0C8;"><div style="position:absolute;left:0;right:0;top:5px;text-align:center;line-height:13px">View Graph</div></div>
<div style="left:800px;top:386px;width:56px;height:22px;background:#D4D0C8;box-shadow:inset -1px -1px #404040,inset 1px 1px #fff,inset -2px -2px #808080,inset 2px 2px #D4D0C8;"><div style="position:absolute;left:0;right:0;top:5px;text-align:center;line-height:13px">Toolbox</div></div>
<div style="left:858px;top:386px;width:56px;height:22px;background:#D4D0C8;box-shadow:inset -1px -1px #404040,inset 1px 1px #fff,inset -2px -2px #808080,inset 2px 2px #D4D0C8;"><div style="position:absolute;left:0;right:0;top:5px;text-align:center;line-height:13px">Compare</div></div>
<div style="left:800px;top:411px;width:56px;height:23px;background:#D4D0C8;box-shadow:inset -1px -1px #000,inset 1px 1px #000,inset -2px -2px #404040,inset 2px 2px #fff,inset -3px -3px #808080;"><div style="position:absolute;left:0;right:0;top:5px;text-align:center;line-height:13px">Save</div></div>
<div style="left:858px;top:411px;width:56px;height:23px;background:#D4D0C8;box-shadow:inset -1px -1px #404040,inset 1px 1px #fff,inset -2px -2px #808080,inset 2px 2px #D4D0C8;"><div style="position:absolute;left:0;right:0;top:5px;text-align:center;line-height:13px">Cancel</div></div>
<div style="left:948px;top:96px;width:179px;height:273px;background:#D4D0C8;box-shadow:inset -1px -1px #404040,inset 1px 1px #D4D0C8,inset 2px 2px #fff;"></div>
<div style="left:951px;top:99px;width:173px;height:18px;background:linear-gradient(to right,#808080,#C0C0C0)"></div>
<svg style="position:absolute;left:953px;top:101px" width="17" height="13" viewBox="0 0 17 13"><rect x="1.0" y="0.5" width="1.2" height="2.5" fill="#000"/><rect x="1.0" y="10.5" width="1.2" height="2.5" fill="#000"/><rect x="4.0" y="0.5" width="1.2" height="2.5" fill="#000"/><rect x="4.0" y="10.5" width="1.2" height="2.5" fill="#000"/><rect x="7.0" y="0.5" width="1.2" height="2.5" fill="#000"/><rect x="7.0" y="10.5" width="1.2" height="2.5" fill="#000"/><rect x="10.0" y="0.5" width="1.2" height="2.5" fill="#000"/><rect x="10.0" y="10.5" width="1.2" height="2.5" fill="#000"/><rect x="13.0" y="0.5" width="1.2" height="2.5" fill="#000"/><rect x="13.0" y="10.5" width="1.2" height="2.5" fill="#000"/><rect x="0" y="3.5" width="15.5" height="7" fill="#000"/></svg>
<div style="left:970px;top:101px;white-space:nowrap;color:#D4D0C8;font-weight:bold;font-size:11px;line-height:14px;letter-spacing:0.07px">Open Loop Idle AFR C...</div>
<div style="left:1106px;top:101px;width:16px;height:14px;background:#D4D0C8;box-shadow:inset -1px -1px #404040,inset 1px 1px #fff,inset -2px -2px #808080,inset 2px 2px #D4D0C8;"><svg style="position:absolute;left:4px;top:3px" width="8" height="7" viewBox="0 0 8 7"><path d="M0.5 0.5L7.5 6.5M7.5 0.5L0.5 6.5" stroke="#000" stroke-width="1.6"/></svg></div>
<div style="left:962px;top:118px;width:154px;height:168px;background:#fff;box-shadow:inset 1px 1px #808080,inset -1px -1px #fff,inset 2px 2px #404040,inset -2px -2px #D4D0C8;"></div>
<div style="left:964px;top:121px;width:150px;height:13px;background:#D4D0C8;box-shadow:inset 1px 1px #fff,inset -1px -1px #808080;"><div style="position:absolute;left:0;right:0;top:2px;line-height:13px;text-align:center;font-weight:bold;font-size:12px;white-space:nowrap"></div></div>
<div style="left:964px;top:134px;width:74px;height:15px;background:#D4D0C8;box-shadow:inset 1px 1px #fff,inset -1px -1px #808080;"><div style="position:absolute;left:0;right:0;top:3px;line-height:13px;text-align:center;white-space:nowrap">MAP</div></div>
<div style="left:1038px;top:134px;width:76px;height:15px;background:#E0E0E0;box-shadow:inset 1px 1px #fff,inset -1px -1px #808080;"><div style="position:absolute;left:0;right:0;top:3px;line-height:13px;text-align:center;white-space:nowrap">Mult.</div></div>
<div style="left:964px;top:149px;width:74px;height:15px;background:#E0E0E0;box-shadow:inset 1px 1px #fff,inset -1px -1px #808080;"><div style="position:absolute;left:0;right:0;top:3px;line-height:13px;text-align:right;padding-right:3px;letter-spacing:0.4px;white-space:nowrap">100</div></div>
<div style="left:1038px;top:150px;width:76px;height:15px;background:#D8D8D8;box-shadow:inset 0 0 0 1px #202020;"><div style="position:absolute;left:0;right:0;top:2px;line-height:13px;text-align:right;padding-right:1px;letter-spacing:0.4px;white-space:nowrap">0.75</div></div>
<div style="left:964px;top:164px;width:74px;height:15px;background:#D4D0C8;box-shadow:inset 1px 1px #fff,inset -1px -1px #808080;"><div style="position:absolute;left:0;right:0;top:3px;line-height:13px;text-align:right;padding-right:3px;letter-spacing:0.4px;white-space:nowrap">90</div></div>
<div style="left:1038px;top:165px;width:76px;height:15px;background:#fff;box-shadow:inset -1px -1px #D4D0C8;"><div style="position:absolute;left:0;right:0;top:2px;line-height:13px;text-align:right;padding-right:1px;letter-spacing:0.4px;white-space:nowrap">0.81</div></div>
<div style="left:964px;top:179px;width:74px;height:15px;background:#D4D0C8;box-shadow:inset 1px 1px #fff,inset -1px -1px #808080;"><div style="position:absolute;left:0;right:0;top:3px;line-height:13px;text-align:right;padding-right:3px;letter-spacing:0.4px;white-space:nowrap">80</div></div>
<div style="left:1038px;top:180px;width:76px;height:15px;background:#fff;box-shadow:inset -1px -1px #D4D0C8;"><div style="position:absolute;left:0;right:0;top:2px;line-height:13px;text-align:right;padding-right:1px;letter-spacing:0.4px;white-space:nowrap">0.84</div></div>
<div style="left:964px;top:194px;width:74px;height:15px;background:#D4D0C8;box-shadow:inset 1px 1px #fff,inset -1px -1px #808080;"><div style="position:absolute;left:0;right:0;top:3px;line-height:13px;text-align:right;padding-right:3px;letter-spacing:0.4px;white-space:nowrap">70</div></div>
<div style="left:1038px;top:195px;width:76px;height:15px;background:#fff;box-shadow:inset -1px -1px #D4D0C8;"><div style="position:absolute;left:0;right:0;top:2px;line-height:13px;text-align:right;padding-right:1px;letter-spacing:0.4px;white-space:nowrap">0.88</div></div>
<div style="left:964px;top:209px;width:74px;height:15px;background:#D4D0C8;box-shadow:inset 1px 1px #fff,inset -1px -1px #808080;"><div style="position:absolute;left:0;right:0;top:3px;line-height:13px;text-align:right;padding-right:3px;letter-spacing:0.4px;white-space:nowrap">60</div></div>
<div style="left:1038px;top:210px;width:76px;height:15px;background:#fff;box-shadow:inset -1px -1px #D4D0C8;"><div style="position:absolute;left:0;right:0;top:2px;line-height:13px;text-align:right;padding-right:1px;letter-spacing:0.4px;white-space:nowrap">0.94</div></div>
<div style="left:964px;top:224px;width:74px;height:15px;background:#D4D0C8;box-shadow:inset 1px 1px #fff,inset -1px -1px #808080;"><div style="position:absolute;left:0;right:0;top:3px;line-height:13px;text-align:right;padding-right:3px;letter-spacing:0.4px;white-space:nowrap">50</div></div>
<div style="left:1038px;top:225px;width:76px;height:15px;background:#fff;box-shadow:inset -1px -1px #D4D0C8;"><div style="position:absolute;left:0;right:0;top:2px;line-height:13px;text-align:right;padding-right:1px;letter-spacing:0.4px;white-space:nowrap">1.00</div></div>
<div style="left:964px;top:239px;width:74px;height:15px;background:#D4D0C8;box-shadow:inset 1px 1px #fff,inset -1px -1px #808080;"><div style="position:absolute;left:0;right:0;top:3px;line-height:13px;text-align:right;padding-right:3px;letter-spacing:0.4px;white-space:nowrap">40</div></div>
<div style="left:1038px;top:240px;width:76px;height:15px;background:#fff;box-shadow:inset -1px -1px #D4D0C8;"><div style="position:absolute;left:0;right:0;top:2px;line-height:13px;text-align:right;padding-right:1px;letter-spacing:0.4px;white-space:nowrap">1.00</div></div>
<div style="left:964px;top:254px;width:74px;height:15px;background:#D4D0C8;box-shadow:inset 1px 1px #fff,inset -1px -1px #808080;"><div style="position:absolute;left:0;right:0;top:3px;line-height:13px;text-align:right;padding-right:3px;letter-spacing:0.4px;white-space:nowrap">30</div></div>
<div style="left:1038px;top:255px;width:76px;height:15px;background:#fff;box-shadow:inset -1px -1px #D4D0C8;"><div style="position:absolute;left:0;right:0;top:2px;line-height:13px;text-align:right;padding-right:1px;letter-spacing:0.4px;white-space:nowrap">1.00</div></div>
<div style="left:964px;top:269px;width:74px;height:15px;background:#D4D0C8;box-shadow:inset 1px 1px #fff,inset -1px -1px #808080;"><div style="position:absolute;left:0;right:0;top:3px;line-height:13px;text-align:right;padding-right:3px;letter-spacing:0.4px;white-space:nowrap">20</div></div>
<div style="left:1038px;top:270px;width:76px;height:15px;background:#fff;box-shadow:inset -1px -1px #D4D0C8;"><div style="position:absolute;left:0;right:0;top:2px;line-height:13px;text-align:right;padding-right:1px;letter-spacing:0.4px;white-space:nowrap">1.06</div></div>
<div style="left:979px;top:290px;width:116px;height:22px;background:#D4D0C8;box-shadow:inset -1px -1px #404040,inset 1px 1px #fff,inset -2px -2px #808080,inset 2px 2px #D4D0C8;"><div style="position:absolute;left:0;right:0;top:5px;text-align:center;line-height:13px">View Graph</div></div>
<div style="left:979px;top:315px;width:56px;height:22px;background:#D4D0C8;box-shadow:inset -1px -1px #404040,inset 1px 1px #fff,inset -2px -2px #808080,inset 2px 2px #D4D0C8;"><div style="position:absolute;left:0;right:0;top:5px;text-align:center;line-height:13px">Toolbox</div></div>
<div style="left:1037px;top:315px;width:56px;height:22px;background:#D4D0C8;box-shadow:inset -1px -1px #404040,inset 1px 1px #fff,inset -2px -2px #808080,inset 2px 2px #D4D0C8;"><div style="position:absolute;left:0;right:0;top:5px;text-align:center;line-height:13px">Compare</div></div>
<div style="left:979px;top:340px;width:56px;height:23px;background:#D4D0C8;box-shadow:inset -1px -1px #000,inset 1px 1px #000,inset -2px -2px #404040,inset 2px 2px #fff,inset -3px -3px #808080;"><div style="position:absolute;left:0;right:0;top:5px;text-align:center;line-height:13px">Save</div></div>
<div style="left:1037px;top:340px;width:56px;height:23px;background:#D4D0C8;box-shadow:inset -1px -1px #404040,inset 1px 1px #fff,inset -2px -2px #808080,inset 2px 2px #D4D0C8;"><div style="position:absolute;left:0;right:0;top:5px;text-align:center;line-height:13px">Cancel</div></div>
<div style="left:281px;top:442px;width:179px;height:333px;background:#D4D0C8;box-shadow:inset -1px -1px #404040,inset 1px 1px #D4D0C8,inset 2px 2px #fff;"></div>
<div style="left:284px;top:445px;width:173px;height:18px;background:linear-gradient(to right,#808080,#C0C0C0)"></div>
<svg style="position:absolute;left:286px;top:447px" width="17" height="13" viewBox="0 0 17 13"><rect x="1.0" y="0.5" width="1.2" height="2.5" fill="#000"/><rect x="1.0" y="10.5" width="1.2" height="2.5" fill="#000"/><rect x="4.0" y="0.5" width="1.2" height="2.5" fill="#000"/><rect x="4.0" y="10.5" width="1.2" height="2.5" fill="#000"/><rect x="7.0" y="0.5" width="1.2" height="2.5" fill="#000"/><rect x="7.0" y="10.5" width="1.2" height="2.5" fill="#000"/><rect x="10.0" y="0.5" width="1.2" height="2.5" fill="#000"/><rect x="10.0" y="10.5" width="1.2" height="2.5" fill="#000"/><rect x="13.0" y="0.5" width="1.2" height="2.5" fill="#000"/><rect x="13.0" y="10.5" width="1.2" height="2.5" fill="#000"/><rect x="0" y="3.5" width="15.5" height="7" fill="#000"/></svg>
<div style="left:303px;top:447px;white-space:nowrap;color:#D4D0C8;font-weight:bold;font-size:11px;line-height:14px;letter-spacing:0.35px">Air/Fuel Timeout Cha...</div>
<div style="left:439px;top:447px;width:16px;height:14px;background:#D4D0C8;box-shadow:inset -1px -1px #404040,inset 1px 1px #fff,inset -2px -2px #808080,inset 2px 2px #D4D0C8;"><svg style="position:absolute;left:4px;top:3px" width="8" height="7" viewBox="0 0 8 7"><path d="M0.5 0.5L7.5 6.5M7.5 0.5L0.5 6.5" stroke="#000" stroke-width="1.6"/></svg></div>
<div style="left:295px;top:464px;width:154px;height:228px;background:#fff;box-shadow:inset 1px 1px #808080,inset -1px -1px #fff,inset 2px 2px #404040,inset -2px -2px #D4D0C8;"></div>
<div style="left:297px;top:467px;width:150px;height:13px;background:#D4D0C8;box-shadow:inset 1px 1px #fff,inset -1px -1px #808080;"><div style="position:absolute;left:0;right:0;top:2px;line-height:13px;text-align:center;font-weight:bold;font-size:12px;white-space:nowrap"></div></div>
<div style="left:297px;top:480px;width:74px;height:15px;background:#D4D0C8;box-shadow:inset 1px 1px #fff,inset -1px -1px #808080;"><div style="position:absolute;left:0;right:0;top:3px;line-height:13px;text-align:center;white-space:nowrap">Deg. C</div></div>
<div style="left:371px;top:480px;width:76px;height:15px;background:#E0E0E0;box-shadow:inset 1px 1px #fff,inset -1px -1px #808080;"><div style="position:absolute;left:0;right:0;top:3px;line-height:13px;text-align:center;white-space:nowrap">Ratio</div></div>
<div style="left:297px;top:495px;width:74px;height:15px;background:#E0E0E0;box-shadow:inset 1px 1px #fff,inset -1px -1px #808080;"><div style="position:absolute;left:0;right:0;top:3px;line-height:13px;text-align:right;padding-right:3px;letter-spacing:0.4px;white-space:nowrap">116</div></div>
<div style="left:371px;top:496px;width:76px;height:15px;background:#D8D8D8;box-shadow:inset 0 0 0 1px #202020;"><div style="position:absolute;left:0;right:0;top:2px;line-height:13px;text-align:right;padding-right:1px;letter-spacing:0.4px;white-space:nowrap">1.4</div></div>
<div style="left:297px;top:510px;width:74px;height:15px;background:#D4D0C8;box-shadow:inset 1px 1px #fff,inset -1px -1px #808080;"><div style="position:absolute;left:0;right:0;top:3px;line-height:13px;text-align:right;padding-right:3px;letter-spacing:0.4px;white-space:nowrap">104</div></div>
<div style="left:371px;top:511px;width:76px;height:15px;background:#fff;box-shadow:inset -1px -1px #D4D0C8;"><div style="position:absolute;left:0;right:0;top:2px;line-height:13px;text-align:right;padding-right:1px;letter-spacing:0.4px;white-space:nowrap">0.2</div></div>
<div style="left:297px;top:525px;width:74px;height:15px;background:#D4D0C8;box-shadow:inset 1px 1px #fff,inset -1px -1px #808080;"><div style="position:absolute;left:0;right:0;top:3px;line-height:13px;text-align:right;padding-right:3px;letter-spacing:0.4px;white-space:nowrap">92</div></div>
<div style="left:371px;top:526px;width:76px;height:15px;background:#fff;box-shadow:inset -1px -1px #D4D0C8;"><div style="position:absolute;left:0;right:0;top:2px;line-height:13px;text-align:right;padding-right:1px;letter-spacing:0.4px;white-space:nowrap">0.3</div></div>
<div style="left:297px;top:540px;width:74px;height:15px;background:#D4D0C8;box-shadow:inset 1px 1px #fff,inset -1px -1px #808080;"><div style="position:absolute;left:0;right:0;top:3px;line-height:13px;text-align:right;padding-right:3px;letter-spacing:0.4px;white-space:nowrap">80</div></div>
<div style="left:371px;top:541px;width:76px;height:15px;background:#fff;box-shadow:inset -1px -1px #D4D0C8;"><div style="position:absolute;left:0;right:0;top:2px;line-height:13px;text-align:right;padding-right:1px;letter-spacing:0.4px;white-space:nowrap">0.8</div></div>
<div style="left:297px;top:555px;width:74px;height:15px;background:#D4D0C8;box-shadow:inset 1px 1px #fff,inset -1px -1px #808080;"><div style="position:absolute;left:0;right:0;top:3px;line-height:13px;text-align:right;padding-right:3px;letter-spacing:0.4px;white-space:nowrap">68</div></div>
<div style="left:371px;top:556px;width:76px;height:15px;background:#fff;box-shadow:inset -1px -1px #D4D0C8;"><div style="position:absolute;left:0;right:0;top:2px;line-height:13px;text-align:right;padding-right:1px;letter-spacing:0.4px;white-space:nowrap">1.8</div></div>
<div style="left:297px;top:570px;width:74px;height:15px;background:#D4D0C8;box-shadow:inset 1px 1px #fff,inset -1px -1px #808080;"><div style="position:absolute;left:0;right:0;top:3px;line-height:13px;text-align:right;padding-right:3px;letter-spacing:0.4px;white-space:nowrap">56</div></div>
<div style="left:371px;top:571px;width:76px;height:15px;background:#fff;box-shadow:inset -1px -1px #D4D0C8;"><div style="position:absolute;left:0;right:0;top:2px;line-height:13px;text-align:right;padding-right:1px;letter-spacing:0.4px;white-space:nowrap">2.6</div></div>
<div style="left:297px;top:585px;width:74px;height:15px;background:#D4D0C8;box-shadow:inset 1px 1px #fff,inset -1px -1px #808080;"><div style="position:absolute;left:0;right:0;top:3px;line-height:13px;text-align:right;padding-right:3px;letter-spacing:0.4px;white-space:nowrap">44</div></div>
<div style="left:371px;top:586px;width:76px;height:15px;background:#fff;box-shadow:inset -1px -1px #D4D0C8;"><div style="position:absolute;left:0;right:0;top:2px;line-height:13px;text-align:right;padding-right:1px;letter-spacing:0.4px;white-space:nowrap">3.1</div></div>
<div style="left:297px;top:600px;width:74px;height:15px;background:#D4D0C8;box-shadow:inset 1px 1px #fff,inset -1px -1px #808080;"><div style="position:absolute;left:0;right:0;top:3px;line-height:13px;text-align:right;padding-right:3px;letter-spacing:0.4px;white-space:nowrap">32</div></div>
<div style="left:371px;top:601px;width:76px;height:15px;background:#fff;box-shadow:inset -1px -1px #D4D0C8;"><div style="position:absolute;left:0;right:0;top:2px;line-height:13px;text-align:right;padding-right:1px;letter-spacing:0.4px;white-space:nowrap">3.7</div></div>
<div style="left:297px;top:615px;width:74px;height:15px;background:#D4D0C8;box-shadow:inset 1px 1px #fff,inset -1px -1px #808080;"><div style="position:absolute;left:0;right:0;top:3px;line-height:13px;text-align:right;padding-right:3px;letter-spacing:0.4px;white-space:nowrap">20</div></div>
<div style="left:371px;top:616px;width:76px;height:15px;background:#fff;box-shadow:inset -1px -1px #D4D0C8;"><div style="position:absolute;left:0;right:0;top:2px;line-height:13px;text-align:right;padding-right:1px;letter-spacing:0.4px;white-space:nowrap">4.2</div></div>
<div style="left:297px;top:630px;width:74px;height:15px;background:#D4D0C8;box-shadow:inset 1px 1px #fff,inset -1px -1px #808080;"><div style="position:absolute;left:0;right:0;top:3px;line-height:13px;text-align:right;padding-right:3px;letter-spacing:0.4px;white-space:nowrap">8</div></div>
<div style="left:371px;top:631px;width:76px;height:15px;background:#fff;box-shadow:inset -1px -1px #D4D0C8;"><div style="position:absolute;left:0;right:0;top:2px;line-height:13px;text-align:right;padding-right:1px;letter-spacing:0.4px;white-space:nowrap">4.3</div></div>
<div style="left:297px;top:645px;width:74px;height:15px;background:#D4D0C8;box-shadow:inset 1px 1px #fff,inset -1px -1px #808080;"><div style="position:absolute;left:0;right:0;top:3px;line-height:13px;text-align:right;padding-right:3px;letter-spacing:0.4px;white-space:nowrap">-4</div></div>
<div style="left:371px;top:646px;width:76px;height:15px;background:#fff;box-shadow:inset -1px -1px #D4D0C8;"><div style="position:absolute;left:0;right:0;top:2px;line-height:13px;text-align:right;padding-right:1px;letter-spacing:0.4px;white-space:nowrap">4.7</div></div>
<div style="left:297px;top:660px;width:74px;height:15px;background:#D4D0C8;box-shadow:inset 1px 1px #fff,inset -1px -1px #808080;"><div style="position:absolute;left:0;right:0;top:3px;line-height:13px;text-align:right;padding-right:3px;letter-spacing:0.4px;white-space:nowrap">-16</div></div>
<div style="left:371px;top:661px;width:76px;height:15px;background:#fff;box-shadow:inset -1px -1px #D4D0C8;"><div style="position:absolute;left:0;right:0;top:2px;line-height:13px;text-align:right;padding-right:1px;letter-spacing:0.4px;white-space:nowrap">5.0</div></div>
<div style="left:297px;top:675px;width:74px;height:15px;background:#D4D0C8;box-shadow:inset 1px 1px #fff,inset -1px -1px #808080;"><div style="position:absolute;left:0;right:0;top:3px;line-height:13px;text-align:right;padding-right:3px;letter-spacing:0.4px;white-space:nowrap">-28</div></div>
<div style="left:371px;top:676px;width:76px;height:15px;background:#fff;box-shadow:inset -1px -1px #D4D0C8;"><div style="position:absolute;left:0;right:0;top:2px;line-height:13px;text-align:right;padding-right:1px;letter-spacing:0.4px;white-space:nowrap">5.0</div></div>
<div style="left:312px;top:696px;width:116px;height:22px;background:#D4D0C8;box-shadow:inset -1px -1px #404040,inset 1px 1px #fff,inset -2px -2px #808080,inset 2px 2px #D4D0C8;"><div style="position:absolute;left:0;right:0;top:5px;text-align:center;line-height:13px">View Graph</div></div>
<div style="left:312px;top:721px;width:56px;height:22px;background:#D4D0C8;box-shadow:inset -1px -1px #404040,inset 1px 1px #fff,inset -2px -2px #808080,inset 2px 2px #D4D0C8;"><div style="position:absolute;left:0;right:0;top:5px;text-align:center;line-height:13px">Toolbox</div></div>
<div style="left:370px;top:721px;width:56px;height:22px;background:#D4D0C8;box-shadow:inset -1px -1px #404040,inset 1px 1px #fff,inset -2px -2px #808080,inset 2px 2px #D4D0C8;"><div style="position:absolute;left:0;right:0;top:5px;text-align:center;line-height:13px">Compare</div></div>
<div style="left:312px;top:746px;width:56px;height:23px;background:#D4D0C8;box-shadow:inset -1px -1px #000,inset 1px 1px #000,inset -2px -2px #404040,inset 2px 2px #fff,inset -3px -3px #808080;"><div style="position:absolute;left:0;right:0;top:5px;text-align:center;line-height:13px">Save</div></div>
<div style="left:370px;top:746px;width:56px;height:23px;background:#D4D0C8;box-shadow:inset -1px -1px #404040,inset 1px 1px #fff,inset -2px -2px #808080,inset 2px 2px #D4D0C8;"><div style="position:absolute;left:0;right:0;top:5px;text-align:center;line-height:13px">Cancel</div></div>
<div style="left:470px;top:441px;width:179px;height:333px;background:#D4D0C8;box-shadow:inset -1px -1px #404040,inset 1px 1px #D4D0C8,inset 2px 2px #fff;"></div>
<div style="left:473px;top:444px;width:173px;height:18px;background:linear-gradient(to right,#808080,#C0C0C0)"></div>
<svg style="position:absolute;left:475px;top:446px" width="17" height="13" viewBox="0 0 17 13"><rect x="1.0" y="0.5" width="1.2" height="2.5" fill="#000"/><rect x="1.0" y="10.5" width="1.2" height="2.5" fill="#000"/><rect x="4.0" y="0.5" width="1.2" height="2.5" fill="#000"/><rect x="4.0" y="10.5" width="1.2" height="2.5" fill="#000"/><rect x="7.0" y="0.5" width="1.2" height="2.5" fill="#000"/><rect x="7.0" y="10.5" width="1.2" height="2.5" fill="#000"/><rect x="10.0" y="0.5" width="1.2" height="2.5" fill="#000"/><rect x="10.0" y="10.5" width="1.2" height="2.5" fill="#000"/><rect x="13.0" y="0.5" width="1.2" height="2.5" fill="#000"/><rect x="13.0" y="10.5" width="1.2" height="2.5" fill="#000"/><rect x="0" y="3.5" width="15.5" height="7" fill="#000"/></svg>
<div style="left:492px;top:446px;white-space:nowrap;color:#D4D0C8;font-weight:bold;font-size:11px;line-height:14px;letter-spacing:0.35px">Air/Fuel Timeout Red...</div>
<div style="left:628px;top:446px;width:16px;height:14px;background:#D4D0C8;box-shadow:inset -1px -1px #404040,inset 1px 1px #fff,inset -2px -2px #808080,inset 2px 2px #D4D0C8;"><svg style="position:absolute;left:4px;top:3px" width="8" height="7" viewBox="0 0 8 7"><path d="M0.5 0.5L7.5 6.5M7.5 0.5L0.5 6.5" stroke="#000" stroke-width="1.6"/></svg></div>
<div style="left:484px;top:463px;width:154px;height:228px;background:#fff;box-shadow:inset 1px 1px #808080,inset -1px -1px #fff,inset 2px 2px #404040,inset -2px -2px #D4D0C8;"></div>
<div style="left:486px;top:466px;width:150px;height:13px;background:#D4D0C8;box-shadow:inset 1px 1px #fff,inset -1px -1px #808080;"><div style="position:absolute;left:0;right:0;top:2px;line-height:13px;text-align:center;font-weight:bold;font-size:12px;white-space:nowrap"></div></div>
<div style="left:486px;top:479px;width:74px;height:15px;background:#D4D0C8;box-shadow:inset 1px 1px #fff,inset -1px -1px #808080;"><div style="position:absolute;left:0;right:0;top:3px;line-height:13px;text-align:center;white-space:nowrap">Deg. C</div></div>
<div style="left:560px;top:479px;width:76px;height:15px;background:#E0E0E0;box-shadow:inset 1px 1px #fff,inset -1px -1px #808080;"><div style="position:absolute;left:0;right:0;top:3px;line-height:13px;text-align:center;white-space:nowrap"># Injections</div></div>
<div style="left:486px;top:494px;width:74px;height:15px;background:#E0E0E0;box-shadow:inset 1px 1px #fff,inset -1px -1px #808080;"><div style="position:absolute;left:0;right:0;top:3px;line-height:13px;text-align:right;padding-right:3px;letter-spacing:0.4px;white-space:nowrap">116</div></div>
<div style="left:560px;top:495px;width:76px;height:15px;background:#D8D8D8;box-shadow:inset 0 0 0 1px #202020;"><div style="position:absolute;left:0;right:0;top:2px;line-height:13px;text-align:right;padding-right:1px;letter-spacing:0.4px;white-space:nowrap">26</div></div>
<div style="left:486px;top:509px;width:74px;height:15px;background:#D4D0C8;box-shadow:inset 1px 1px #fff,inset -1px -1px #808080;"><div style="position:absolute;left:0;right:0;top:3px;line-height:13px;text-align:right;padding-right:3px;letter-spacing:0.4px;white-space:nowrap">104</div></div>
<div style="left:560px;top:510px;width:76px;height:15px;background:#fff;box-shadow:inset -1px -1px #D4D0C8;"><div style="position:absolute;left:0;right:0;top:2px;line-height:13px;text-align:right;padding-right:1px;letter-spacing:0.4px;white-space:nowrap">26</div></div>
<div style="left:486px;top:524px;width:74px;height:15px;background:#D4D0C8;box-shadow:inset 1px 1px #fff,inset -1px -1px #808080;"><div style="position:absolute;left:0;right:0;top:3px;line-height:13px;text-align:right;padding-right:3px;letter-spacing:0.4px;white-space:nowrap">92</div></div>
<div style="left:560px;top:525px;width:76px;height:15px;background:#fff;box-shadow:inset -1px -1px #D4D0C8;"><div style="position:absolute;left:0;right:0;top:2px;line-height:13px;text-align:right;padding-right:1px;letter-spacing:0.4px;white-space:nowrap">13</div></div>
<div style="left:486px;top:539px;width:74px;height:15px;background:#D4D0C8;box-shadow:inset 1px 1px #fff,inset -1px -1px #808080;"><div style="position:absolute;left:0;right:0;top:3px;line-height:13px;text-align:right;padding-right:3px;letter-spacing:0.4px;white-space:nowrap">80</div></div>
<div style="left:560px;top:540px;width:76px;height:15px;background:#fff;box-shadow:inset -1px -1px #D4D0C8;"><div style="position:absolute;left:0;right:0;top:2px;line-height:13px;text-align:right;padding-right:1px;letter-spacing:0.4px;white-space:nowrap">13</div></div>
<div style="left:486px;top:554px;width:74px;height:15px;background:#D4D0C8;box-shadow:inset 1px 1px #fff,inset -1px -1px #808080;"><div style="position:absolute;left:0;right:0;top:3px;line-height:13px;text-align:right;padding-right:3px;letter-spacing:0.4px;white-space:nowrap">68</div></div>
<div style="left:560px;top:555px;width:76px;height:15px;background:#fff;box-shadow:inset -1px -1px #D4D0C8;"><div style="position:absolute;left:0;right:0;top:2px;line-height:13px;text-align:right;padding-right:1px;letter-spacing:0.4px;white-space:nowrap">13</div></div>
<div style="left:486px;top:569px;width:74px;height:15px;background:#D4D0C8;box-shadow:inset 1px 1px #fff,inset -1px -1px #808080;"><div style="position:absolute;left:0;right:0;top:3px;line-height:13px;text-align:right;padding-right:3px;letter-spacing:0.4px;white-space:nowrap">56</div></div>
<div style="left:560px;top:570px;width:76px;height:15px;background:#fff;box-shadow:inset -1px -1px #D4D0C8;"><div style="position:absolute;left:0;right:0;top:2px;line-height:13px;text-align:right;padding-right:1px;letter-spacing:0.4px;white-space:nowrap">13</div></div>
<div style="left:486px;top:584px;width:74px;height:15px;background:#D4D0C8;box-shadow:inset 1px 1px #fff,inset -1px -1px #808080;"><div style="position:absolute;left:0;right:0;top:3px;line-height:13px;text-align:right;padding-right:3px;letter-spacing:0.4px;white-space:nowrap">44</div></div>
<div style="left:560px;top:585px;width:76px;height:15px;background:#fff;box-shadow:inset -1px -1px #D4D0C8;"><div style="position:absolute;left:0;right:0;top:2px;line-height:13px;text-align:right;padding-right:1px;letter-spacing:0.4px;white-space:nowrap">32</div></div>
<div style="left:486px;top:599px;width:74px;height:15px;background:#D4D0C8;box-shadow:inset 1px 1px #fff,inset -1px -1px #808080;"><div style="position:absolute;left:0;right:0;top:3px;line-height:13px;text-align:right;padding-right:3px;letter-spacing:0.4px;white-space:nowrap">32</div></div>
<div style="left:560px;top:600px;width:76px;height:15px;background:#fff;box-shadow:inset -1px -1px #D4D0C8;"><div style="position:absolute;left:0;right:0;top:2px;line-height:13px;text-align:right;padding-right:1px;letter-spacing:0.4px;white-space:nowrap">32</div></div>
<div style="left:486px;top:614px;width:74px;height:15px;background:#D4D0C8;box-shadow:inset 1px 1px #fff,inset -1px -1px #808080;"><div style="position:absolute;left:0;right:0;top:3px;line-height:13px;text-align:right;padding-right:3px;letter-spacing:0.4px;white-space:nowrap">20</div></div>
<div style="left:560px;top:615px;width:76px;height:15px;background:#fff;box-shadow:inset -1px -1px #D4D0C8;"><div style="position:absolute;left:0;right:0;top:2px;line-height:13px;text-align:right;padding-right:1px;letter-spacing:0.4px;white-space:nowrap">48</div></div>
<div style="left:486px;top:629px;width:74px;height:15px;background:#D4D0C8;box-shadow:inset 1px 1px #fff,inset -1px -1px #808080;"><div style="position:absolute;left:0;right:0;top:3px;line-height:13px;text-align:right;padding-right:3px;letter-spacing:0.4px;white-space:nowrap">8</div></div>
<div style="left:560px;top:630px;width:76px;height:15px;background:#fff;box-shadow:inset -1px -1px #D4D0C8;"><div style="position:absolute;left:0;right:0;top:2px;line-height:13px;text-align:right;padding-right:1px;letter-spacing:0.4px;white-space:nowrap">48</div></div>
<div style="left:486px;top:644px;width:74px;height:15px;background:#D4D0C8;box-shadow:inset 1px 1px #fff,inset -1px -1px #808080;"><div style="position:absolute;left:0;right:0;top:3px;line-height:13px;text-align:right;padding-right:3px;letter-spacing:0.4px;white-space:nowrap">-4</div></div>
<div style="left:560px;top:645px;width:76px;height:15px;background:#fff;box-shadow:inset -1px -1px #D4D0C8;"><div style="position:absolute;left:0;right:0;top:2px;line-height:13px;text-align:right;padding-right:1px;letter-spacing:0.4px;white-space:nowrap">48</div></div>
<div style="left:486px;top:659px;width:74px;height:15px;background:#D4D0C8;box-shadow:inset 1px 1px #fff,inset -1px -1px #808080;"><div style="position:absolute;left:0;right:0;top:3px;line-height:13px;text-align:right;padding-right:3px;letter-spacing:0.4px;white-space:nowrap">-16</div></div>
<div style="left:560px;top:660px;width:76px;height:15px;background:#fff;box-shadow:inset -1px -1px #D4D0C8;"><div style="position:absolute;left:0;right:0;top:2px;line-height:13px;text-align:right;padding-right:1px;letter-spacing:0.4px;white-space:nowrap">48</div></div>
<div style="left:486px;top:674px;width:74px;height:15px;background:#D4D0C8;box-shadow:inset 1px 1px #fff,inset -1px -1px #808080;"><div style="position:absolute;left:0;right:0;top:3px;line-height:13px;text-align:right;padding-right:3px;letter-spacing:0.4px;white-space:nowrap">-28</div></div>
<div style="left:560px;top:675px;width:76px;height:15px;background:#fff;box-shadow:inset -1px -1px #D4D0C8;"><div style="position:absolute;left:0;right:0;top:2px;line-height:13px;text-align:right;padding-right:1px;letter-spacing:0.4px;white-space:nowrap">48</div></div>
<div style="left:501px;top:695px;width:116px;height:22px;background:#D4D0C8;box-shadow:inset -1px -1px #404040,inset 1px 1px #fff,inset -2px -2px #808080,inset 2px 2px #D4D0C8;"><div style="position:absolute;left:0;right:0;top:5px;text-align:center;line-height:13px">View Graph</div></div>
<div style="left:501px;top:720px;width:56px;height:22px;background:#D4D0C8;box-shadow:inset -1px -1px #404040,inset 1px 1px #fff,inset -2px -2px #808080,inset 2px 2px #D4D0C8;"><div style="position:absolute;left:0;right:0;top:5px;text-align:center;line-height:13px">Toolbox</div></div>
<div style="left:559px;top:720px;width:56px;height:22px;background:#D4D0C8;box-shadow:inset -1px -1px #404040,inset 1px 1px #fff,inset -2px -2px #808080,inset 2px 2px #D4D0C8;"><div style="position:absolute;left:0;right:0;top:5px;text-align:center;line-height:13px">Compare</div></div>
<div style="left:501px;top:745px;width:56px;height:23px;background:#D4D0C8;box-shadow:inset -1px -1px #000,inset 1px 1px #000,inset -2px -2px #404040,inset 2px 2px #fff,inset -3px -3px #808080;"><div style="position:absolute;left:0;right:0;top:5px;text-align:center;line-height:13px">Save</div></div>
<div style="left:559px;top:745px;width:56px;height:23px;background:#D4D0C8;box-shadow:inset -1px -1px #404040,inset 1px 1px #fff,inset -2px -2px #808080,inset 2px 2px #D4D0C8;"><div style="position:absolute;left:0;right:0;top:5px;text-align:center;line-height:13px">Cancel</div></div>
<div style="left:651px;top:441px;width:179px;height:333px;background:#D4D0C8;box-shadow:inset -1px -1px #404040,inset 1px 1px #D4D0C8,inset 2px 2px #fff;"></div>
<div style="left:654px;top:444px;width:173px;height:18px;background:linear-gradient(to right,#0A246A,#A6CAF0)"></div>
<svg style="position:absolute;left:656px;top:446px" width="17" height="13" viewBox="0 0 17 13"><rect x="1.0" y="0.5" width="1.2" height="2.5" fill="#B8B8D0"/><rect x="1.0" y="10.5" width="1.2" height="2.5" fill="#B8B8D0"/><rect x="4.0" y="0.5" width="1.2" height="2.5" fill="#B8B8D0"/><rect x="4.0" y="10.5" width="1.2" height="2.5" fill="#B8B8D0"/><rect x="7.0" y="0.5" width="1.2" height="2.5" fill="#B8B8D0"/><rect x="7.0" y="10.5" width="1.2" height="2.5" fill="#B8B8D0"/><rect x="10.0" y="0.5" width="1.2" height="2.5" fill="#B8B8D0"/><rect x="10.0" y="10.5" width="1.2" height="2.5" fill="#B8B8D0"/><rect x="13.0" y="0.5" width="1.2" height="2.5" fill="#B8B8D0"/><rect x="13.0" y="10.5" width="1.2" height="2.5" fill="#B8B8D0"/><rect x="0" y="3.5" width="15.5" height="7" fill="#000"/><rect x="0" y="2.5" width="15.5" height="1" fill="#B8B8D0"/></svg>
<div style="left:673px;top:446px;white-space:nowrap;color:#fff;font-weight:bold;font-size:11px;line-height:14px;letter-spacing:0.35px">Air/Fuel Timeout Dec...</div>
<div style="left:809px;top:446px;width:16px;height:14px;background:#D4D0C8;box-shadow:inset -1px -1px #404040,inset 1px 1px #fff,inset -2px -2px #808080,inset 2px 2px #D4D0C8;"><svg style="position:absolute;left:4px;top:3px" width="8" height="7" viewBox="0 0 8 7"><path d="M0.5 0.5L7.5 6.5M7.5 0.5L0.5 6.5" stroke="#000" stroke-width="1.6"/></svg></div>
<div style="left:665px;top:463px;width:154px;height:228px;background:#fff;box-shadow:inset 1px 1px #808080,inset -1px -1px #fff,inset 2px 2px #404040,inset -2px -2px #D4D0C8;"></div>
<div style="left:667px;top:466px;width:150px;height:13px;background:#D4D0C8;box-shadow:inset 1px 1px #fff,inset -1px -1px #808080;"><div style="position:absolute;left:0;right:0;top:2px;line-height:13px;text-align:center;font-weight:bold;font-size:12px;white-space:nowrap"></div></div>
<div style="left:667px;top:479px;width:74px;height:15px;background:#D4D0C8;box-shadow:inset 1px 1px #fff,inset -1px -1px #808080;"><div style="position:absolute;left:0;right:0;top:3px;line-height:13px;text-align:center;white-space:nowrap">Deg. C</div></div>
<div style="left:741px;top:479px;width:76px;height:15px;background:#F9E8A0;box-shadow:inset 1px 1px #fff,inset -1px -1px #808080;"><div style="position:absolute;left:0;right:0;top:3px;line-height:13px;text-align:center;white-space:nowrap"># Injections</div></div>
<div style="left:667px;top:494px;width:74px;height:15px;background:#F9E8A0;box-shadow:inset 1px 1px #fff,inset -1px -1px #808080;"><div style="position:absolute;left:0;right:0;top:3px;line-height:13px;text-align:right;padding-right:3px;letter-spacing:0.4px;white-space:nowrap">116</div></div>
<div style="left:741px;top:494px;width:76px;height:16px;background:#B9C9E9;box-shadow:inset 0 0 0 2px #000;"><div style="position:absolute;left:0;right:0;top:3px;line-height:13px;text-align:right;padding-right:2px;letter-spacing:0.4px;white-space:nowrap">64</div></div>
<div style="left:667px;top:509px;width:74px;height:15px;background:#D4D0C8;box-shadow:inset 1px 1px #fff,inset -1px -1px #808080;"><div style="position:absolute;left:0;right:0;top:3px;line-height:13px;text-align:right;padding-right:3px;letter-spacing:0.4px;white-space:nowrap">104</div></div>
<div style="left:741px;top:510px;width:76px;height:15px;background:#fff;box-shadow:inset -1px -1px #D4D0C8;"><div style="position:absolute;left:0;right:0;top:2px;line-height:13px;text-align:right;padding-right:1px;letter-spacing:0.4px;white-space:nowrap">64</div></div>
<div style="left:667px;top:524px;width:74px;height:15px;background:#D4D0C8;box-shadow:inset 1px 1px #fff,inset -1px -1px #808080;"><div style="position:absolute;left:0;right:0;top:3px;line-height:13px;text-align:right;padding-right:3px;letter-spacing:0.4px;white-space:nowrap">92</div></div>
<div style="left:741px;top:525px;width:76px;height:15px;background:#fff;box-shadow:inset -1px -1px #D4D0C8;"><div style="position:absolute;left:0;right:0;top:2px;line-height:13px;text-align:right;padding-right:1px;letter-spacing:0.4px;white-space:nowrap">64</div></div>
<div style="left:667px;top:539px;width:74px;height:15px;background:#D4D0C8;box-shadow:inset 1px 1px #fff,inset -1px -1px #808080;"><div style="position:absolute;left:0;right:0;top:3px;line-height:13px;text-align:right;padding-right:3px;letter-spacing:0.4px;white-space:nowrap">80</div></div>
<div style="left:741px;top:540px;width:76px;height:15px;background:#fff;box-shadow:inset -1px -1px #D4D0C8;"><div style="position:absolute;left:0;right:0;top:2px;line-height:13px;text-align:right;padding-right:1px;letter-spacing:0.4px;white-space:nowrap">64</div></div>
<div style="left:667px;top:554px;width:74px;height:15px;background:#D4D0C8;box-shadow:inset 1px 1px #fff,inset -1px -1px #808080;"><div style="position:absolute;left:0;right:0;top:3px;line-height:13px;text-align:right;padding-right:3px;letter-spacing:0.4px;white-space:nowrap">68</div></div>
<div style="left:741px;top:555px;width:76px;height:15px;background:#fff;box-shadow:inset -1px -1px #D4D0C8;"><div style="position:absolute;left:0;right:0;top:2px;line-height:13px;text-align:right;padding-right:1px;letter-spacing:0.4px;white-space:nowrap">80</div></div>
<div style="left:667px;top:569px;width:74px;height:15px;background:#D4D0C8;box-shadow:inset 1px 1px #fff,inset -1px -1px #808080;"><div style="position:absolute;left:0;right:0;top:3px;line-height:13px;text-align:right;padding-right:3px;letter-spacing:0.4px;white-space:nowrap">56</div></div>
<div style="left:741px;top:570px;width:76px;height:15px;background:#fff;box-shadow:inset -1px -1px #D4D0C8;"><div style="position:absolute;left:0;right:0;top:2px;line-height:13px;text-align:right;padding-right:1px;letter-spacing:0.4px;white-space:nowrap">96</div></div>
<div style="left:667px;top:584px;width:74px;height:15px;background:#D4D0C8;box-shadow:inset 1px 1px #fff,inset -1px -1px #808080;"><div style="position:absolute;left:0;right:0;top:3px;line-height:13px;text-align:right;padding-right:3px;letter-spacing:0.4px;white-space:nowrap">44</div></div>
<div style="left:741px;top:585px;width:76px;height:15px;background:#fff;box-shadow:inset -1px -1px #D4D0C8;"><div style="position:absolute;left:0;right:0;top:2px;line-height:13px;text-align:right;padding-right:1px;letter-spacing:0.4px;white-space:nowrap">96</div></div>
<div style="left:667px;top:599px;width:74px;height:15px;background:#D4D0C8;box-shadow:inset 1px 1px #fff,inset -1px -1px #808080;"><div style="position:absolute;left:0;right:0;top:3px;line-height:13px;text-align:right;padding-right:3px;letter-spacing:0.4px;white-space:nowrap">32</div></div>
<div style="left:741px;top:600px;width:76px;height:15px;background:#fff;box-shadow:inset -1px -1px #D4D0C8;"><div style="position:absolute;left:0;right:0;top:2px;line-height:13px;text-align:right;padding-right:1px;letter-spacing:0.4px;white-space:nowrap">96</div></div>
<div style="left:667px;top:614px;width:74px;height:15px;background:#D4D0C8;box-shadow:inset 1px 1px #fff,inset -1px -1px #808080;"><div style="position:absolute;left:0;right:0;top:3px;line-height:13px;text-align:right;padding-right:3px;letter-spacing:0.4px;white-space:nowrap">20</div></div>
<div style="left:741px;top:615px;width:76px;height:15px;background:#fff;box-shadow:inset -1px -1px #D4D0C8;"><div style="position:absolute;left:0;right:0;top:2px;line-height:13px;text-align:right;padding-right:1px;letter-spacing:0.4px;white-space:nowrap">96</div></div>
<div style="left:667px;top:629px;width:74px;height:15px;background:#D4D0C8;box-shadow:inset 1px 1px #fff,inset -1px -1px #808080;"><div style="position:absolute;left:0;right:0;top:3px;line-height:13px;text-align:right;padding-right:3px;letter-spacing:0.4px;white-space:nowrap">8</div></div>
<div style="left:741px;top:630px;width:76px;height:15px;background:#fff;box-shadow:inset -1px -1px #D4D0C8;"><div style="position:absolute;left:0;right:0;top:2px;line-height:13px;text-align:right;padding-right:1px;letter-spacing:0.4px;white-space:nowrap">96</div></div>
<div style="left:667px;top:644px;width:74px;height:15px;background:#D4D0C8;box-shadow:inset 1px 1px #fff,inset -1px -1px #808080;"><div style="position:absolute;left:0;right:0;top:3px;line-height:13px;text-align:right;padding-right:3px;letter-spacing:0.4px;white-space:nowrap">-4</div></div>
<div style="left:741px;top:645px;width:76px;height:15px;background:#fff;box-shadow:inset -1px -1px #D4D0C8;"><div style="position:absolute;left:0;right:0;top:2px;line-height:13px;text-align:right;padding-right:1px;letter-spacing:0.4px;white-space:nowrap">96</div></div>
<div style="left:667px;top:659px;width:74px;height:15px;background:#D4D0C8;box-shadow:inset 1px 1px #fff,inset -1px -1px #808080;"><div style="position:absolute;left:0;right:0;top:3px;line-height:13px;text-align:right;padding-right:3px;letter-spacing:0.4px;white-space:nowrap">-16</div></div>
<div style="left:741px;top:660px;width:76px;height:15px;background:#fff;box-shadow:inset -1px -1px #D4D0C8;"><div style="position:absolute;left:0;right:0;top:2px;line-height:13px;text-align:right;padding-right:1px;letter-spacing:0.4px;white-space:nowrap">128</div></div>
<div style="left:667px;top:674px;width:74px;height:15px;background:#D4D0C8;box-shadow:inset 1px 1px #fff,inset -1px -1px #808080;"><div style="position:absolute;left:0;right:0;top:3px;line-height:13px;text-align:right;padding-right:3px;letter-spacing:0.4px;white-space:nowrap">-28</div></div>
<div style="left:741px;top:675px;width:76px;height:15px;background:#fff;box-shadow:inset -1px -1px #D4D0C8;"><div style="position:absolute;left:0;right:0;top:2px;line-height:13px;text-align:right;padding-right:1px;letter-spacing:0.4px;white-space:nowrap">128</div></div>
<div style="left:682px;top:695px;width:116px;height:22px;background:#D4D0C8;box-shadow:inset -1px -1px #404040,inset 1px 1px #fff,inset -2px -2px #808080,inset 2px 2px #D4D0C8;"><div style="position:absolute;left:0;right:0;top:5px;text-align:center;line-height:13px">View Graph</div></div>
<div style="left:682px;top:720px;width:56px;height:22px;background:#D4D0C8;box-shadow:inset -1px -1px #404040,inset 1px 1px #fff,inset -2px -2px #808080,inset 2px 2px #D4D0C8;"><div style="position:absolute;left:0;right:0;top:5px;text-align:center;line-height:13px">Toolbox</div></div>
<div style="left:740px;top:720px;width:56px;height:22px;background:#D4D0C8;box-shadow:inset -1px -1px #404040,inset 1px 1px #fff,inset -2px -2px #808080,inset 2px 2px #D4D0C8;"><div style="position:absolute;left:0;right:0;top:5px;text-align:center;line-height:13px">Compare</div></div>
<div style="left:682px;top:745px;width:56px;height:23px;background:#D4D0C8;box-shadow:inset -1px -1px #000,inset 1px 1px #000,inset -2px -2px #404040,inset 2px 2px #fff,inset -3px -3px #808080;"><div style="position:absolute;left:0;right:0;top:5px;text-align:center;line-height:13px">Save</div></div>
<div style="left:740px;top:745px;width:56px;height:23px;background:#D4D0C8;box-shadow:inset -1px -1px #404040,inset 1px 1px #fff,inset -2px -2px #808080,inset 2px 2px #D4D0C8;"><div style="position:absolute;left:0;right:0;top:5px;text-align:center;line-height:13px">Cancel</div></div>
<div style="left:840px;top:440px;width:179px;height:348px;background:#D4D0C8;box-shadow:inset -1px -1px #404040,inset 1px 1px #D4D0C8,inset 2px 2px #fff;"></div>
<div style="left:843px;top:443px;width:173px;height:18px;background:linear-gradient(to right,#808080,#C0C0C0)"></div>
<svg style="position:absolute;left:845px;top:445px" width="17" height="13" viewBox="0 0 17 13"><rect x="1.0" y="0.5" width="1.2" height="2.5" fill="#000"/><rect x="1.0" y="10.5" width="1.2" height="2.5" fill="#000"/><rect x="4.0" y="0.5" width="1.2" height="2.5" fill="#000"/><rect x="4.0" y="10.5" width="1.2" height="2.5" fill="#000"/><rect x="7.0" y="0.5" width="1.2" height="2.5" fill="#000"/><rect x="7.0" y="10.5" width="1.2" height="2.5" fill="#000"/><rect x="10.0" y="0.5" width="1.2" height="2.5" fill="#000"/><rect x="10.0" y="10.5" width="1.2" height="2.5" fill="#000"/><rect x="13.0" y="0.5" width="1.2" height="2.5" fill="#000"/><rect x="13.0" y="10.5" width="1.2" height="2.5" fill="#000"/><rect x="0" y="3.5" width="15.5" height="7" fill="#000"/></svg>
<div style="left:862px;top:445px;white-space:nowrap;color:#D4D0C8;font-weight:bold;font-size:11px;line-height:14px;letter-spacing:0.35px">Air/Fuel Timeout Dec...</div>
<div style="left:998px;top:445px;width:16px;height:14px;background:#D4D0C8;box-shadow:inset -1px -1px #404040,inset 1px 1px #fff,inset -2px -2px #808080,inset 2px 2px #D4D0C8;"><svg style="position:absolute;left:4px;top:3px" width="8" height="7" viewBox="0 0 8 7"><path d="M0.5 0.5L7.5 6.5M7.5 0.5L0.5 6.5" stroke="#000" stroke-width="1.6"/></svg></div>
<div style="left:854px;top:462px;width:154px;height:243px;background:#fff;box-shadow:inset 1px 1px #808080,inset -1px -1px #fff,inset 2px 2px #404040,inset -2px -2px #D4D0C8;"></div>
<div style="left:856px;top:465px;width:150px;height:13px;background:#D4D0C8;box-shadow:inset 1px 1px #fff,inset -1px -1px #808080;"><div style="position:absolute;left:0;right:0;top:2px;line-height:13px;text-align:center;font-weight:bold;font-size:12px;white-space:nowrap"></div></div>
<div style="left:856px;top:478px;width:74px;height:15px;background:#D4D0C8;box-shadow:inset 1px 1px #fff,inset -1px -1px #808080;"><div style="position:absolute;left:0;right:0;top:3px;line-height:13px;text-align:center;white-space:nowrap">Deg. C</div></div>
<div style="left:930px;top:478px;width:76px;height:15px;background:#E0E0E0;box-shadow:inset 1px 1px #fff,inset -1px -1px #808080;"><div style="position:absolute;left:0;right:0;top:3px;line-height:13px;text-align:center;white-space:nowrap">Mult.</div></div>
<div style="left:856px;top:493px;width:74px;height:15px;background:#E0E0E0;box-shadow:inset 1px 1px #fff,inset -1px -1px #808080;"><div style="position:absolute;left:0;right:0;top:3px;line-height:13px;text-align:right;padding-right:3px;letter-spacing:0.4px;white-space:nowrap">116</div></div>
<div style="left:930px;top:494px;width:76px;height:15px;background:#D8D8D8;box-shadow:inset 0 0 0 1px #202020;"><div style="position:absolute;left:0;right:0;top:2px;line-height:13px;text-align:right;padding-right:1px;letter-spacing:0.4px;white-space:nowrap">0.992</div></div>
<div style="left:856px;top:508px;width:74px;height:15px;background:#D4D0C8;box-shadow:inset 1px 1px #fff,inset -1px -1px #808080;"><div style="position:absolute;left:0;right:0;top:3px;line-height:13px;text-align:right;padding-right:3px;letter-spacing:0.4px;white-space:nowrap">104</div></div>
<div style="left:930px;top:509px;width:76px;height:15px;background:#fff;box-shadow:inset -1px -1px #D4D0C8;"><div style="position:absolute;left:0;right:0;top:2px;line-height:13px;text-align:right;padding-right:1px;letter-spacing:0.4px;white-space:nowrap">0.969</div></div>
<div style="left:856px;top:523px;width:74px;height:15px;background:#D4D0C8;box-shadow:inset 1px 1px #fff,inset -1px -1px #808080;"><div style="position:absolute;left:0;right:0;top:3px;line-height:13px;text-align:right;padding-right:3px;letter-spacing:0.4px;white-space:nowrap">92</div></div>
<div style="left:930px;top:524px;width:76px;height:15px;background:#fff;box-shadow:inset -1px -1px #D4D0C8;"><div style="position:absolute;left:0;right:0;top:2px;line-height:13px;text-align:right;padding-right:1px;letter-spacing:0.4px;white-space:nowrap">0.969</div></div>
<div style="left:856px;top:538px;width:74px;height:15px;background:#D4D0C8;box-shadow:inset 1px 1px #fff,inset -1px -1px #808080;"><div style="position:absolute;left:0;right:0;top:3px;line-height:13px;text-align:right;padding-right:3px;letter-spacing:0.4px;white-space:nowrap">80</div></div>
<div style="left:930px;top:539px;width:76px;height:15px;background:#fff;box-shadow:inset -1px -1px #D4D0C8;"><div style="position:absolute;left:0;right:0;top:2px;line-height:13px;text-align:right;padding-right:1px;letter-spacing:0.4px;white-space:nowrap">0.977</div></div>
<div style="left:856px;top:553px;width:74px;height:15px;background:#D4D0C8;box-shadow:inset 1px 1px #fff,inset -1px -1px #808080;"><div style="position:absolute;left:0;right:0;top:3px;line-height:13px;text-align:right;padding-right:3px;letter-spacing:0.4px;white-space:nowrap">68</div></div>
<div style="left:930px;top:554px;width:76px;height:15px;background:#fff;box-shadow:inset -1px -1px #D4D0C8;"><div style="position:absolute;left:0;right:0;top:2px;line-height:13px;text-align:right;padding-right:1px;letter-spacing:0.4px;white-space:nowrap">0.973</div></div>
<div style="left:856px;top:568px;width:74px;height:15px;background:#D4D0C8;box-shadow:inset 1px 1px #fff,inset -1px -1px #808080;"><div style="position:absolute;left:0;right:0;top:3px;line-height:13px;text-align:right;padding-right:3px;letter-spacing:0.4px;white-space:nowrap">56</div></div>
<div style="left:930px;top:569px;width:76px;height:15px;background:#fff;box-shadow:inset -1px -1px #D4D0C8;"><div style="position:absolute;left:0;right:0;top:2px;line-height:13px;text-align:right;padding-right:1px;letter-spacing:0.4px;white-space:nowrap">0.969</div></div>
<div style="left:856px;top:583px;width:74px;height:15px;background:#D4D0C8;box-shadow:inset 1px 1px #fff,inset -1px -1px #808080;"><div style="position:absolute;left:0;right:0;top:3px;line-height:13px;text-align:right;padding-right:3px;letter-spacing:0.4px;white-space:nowrap">44</div></div>
<div style="left:930px;top:584px;width:76px;height:15px;background:#fff;box-shadow:inset -1px -1px #D4D0C8;"><div style="position:absolute;left:0;right:0;top:2px;line-height:13px;text-align:right;padding-right:1px;letter-spacing:0.4px;white-space:nowrap">0.969</div></div>
<div style="left:856px;top:598px;width:74px;height:15px;background:#D4D0C8;box-shadow:inset 1px 1px #fff,inset -1px -1px #808080;"><div style="position:absolute;left:0;right:0;top:3px;line-height:13px;text-align:right;padding-right:3px;letter-spacing:0.4px;white-space:nowrap">32</div></div>
<div style="left:930px;top:599px;width:76px;height:15px;background:#fff;box-shadow:inset -1px -1px #D4D0C8;"><div style="position:absolute;left:0;right:0;top:2px;line-height:13px;text-align:right;padding-right:1px;letter-spacing:0.4px;white-space:nowrap">0.969</div></div>
<div style="left:856px;top:613px;width:74px;height:15px;background:#D4D0C8;box-shadow:inset 1px 1px #fff,inset -1px -1px #808080;"><div style="position:absolute;left:0;right:0;top:3px;line-height:13px;text-align:right;padding-right:3px;letter-spacing:0.4px;white-space:nowrap">20</div></div>
<div style="left:930px;top:614px;width:76px;height:15px;background:#fff;box-shadow:inset -1px -1px #D4D0C8;"><div style="position:absolute;left:0;right:0;top:2px;line-height:13px;text-align:right;padding-right:1px;letter-spacing:0.4px;white-space:nowrap">0.977</div></div>
<div style="left:856px;top:628px;width:74px;height:15px;background:#D4D0C8;box-shadow:inset 1px 1px #fff,inset -1px -1px #808080;"><div style="position:absolute;left:0;right:0;top:3px;line-height:13px;text-align:right;padding-right:3px;letter-spacing:0.4px;white-space:nowrap">8</div></div>
<div style="left:930px;top:629px;width:76px;height:15px;background:#fff;box-shadow:inset -1px -1px #D4D0C8;"><div style="position:absolute;left:0;right:0;top:2px;line-height:13px;text-align:right;padding-right:1px;letter-spacing:0.4px;white-space:nowrap">0.977</div></div>
<div style="left:856px;top:643px;width:74px;height:15px;background:#D4D0C8;box-shadow:inset 1px 1px #fff,inset -1px -1px #808080;"><div style="position:absolute;left:0;right:0;top:3px;line-height:13px;text-align:right;padding-right:3px;letter-spacing:0.4px;white-space:nowrap">-4</div></div>
<div style="left:930px;top:644px;width:76px;height:15px;background:#fff;box-shadow:inset -1px -1px #D4D0C8;"><div style="position:absolute;left:0;right:0;top:2px;line-height:13px;text-align:right;padding-right:1px;letter-spacing:0.4px;white-space:nowrap">0.969</div></div>
<div style="left:856px;top:658px;width:74px;height:15px;background:#D4D0C8;box-shadow:inset 1px 1px #fff,inset -1px -1px #808080;"><div style="position:absolute;left:0;right:0;top:3px;line-height:13px;text-align:right;padding-right:3px;letter-spacing:0.4px;white-space:nowrap">-16</div></div>
<div style="left:930px;top:659px;width:76px;height:15px;background:#fff;box-shadow:inset -1px -1px #D4D0C8;"><div style="position:absolute;left:0;right:0;top:2px;line-height:13px;text-align:right;padding-right:1px;letter-spacing:0.4px;white-space:nowrap">0.969</div></div>
<div style="left:856px;top:673px;width:74px;height:15px;background:#D4D0C8;box-shadow:inset 1px 1px #fff,inset -1px -1px #808080;"><div style="position:absolute;left:0;right:0;top:3px;line-height:13px;text-align:right;padding-right:3px;letter-spacing:0.4px;white-space:nowrap">-28</div></div>
<div style="left:930px;top:674px;width:76px;height:15px;background:#fff;box-shadow:inset -1px -1px #D4D0C8;"><div style="position:absolute;left:0;right:0;top:2px;line-height:13px;text-align:right;padding-right:1px;letter-spacing:0.4px;white-space:nowrap">0.969</div></div>
<div style="left:856px;top:688px;width:74px;height:15px;background:#D4D0C8;box-shadow:inset 1px 1px #fff,inset -1px -1px #808080;"><div style="position:absolute;left:0;right:0;top:3px;line-height:13px;text-align:right;padding-right:3px;letter-spacing:0.4px;white-space:nowrap">-40</div></div>
<div style="left:930px;top:689px;width:76px;height:15px;background:#fff;box-shadow:inset -1px -1px #D4D0C8;"><div style="position:absolute;left:0;right:0;top:2px;line-height:13px;text-align:right;padding-right:1px;letter-spacing:0.4px;white-space:nowrap">0.969</div></div>
<div style="left:871px;top:709px;width:116px;height:22px;background:#D4D0C8;box-shadow:inset -1px -1px #404040,inset 1px 1px #fff,inset -2px -2px #808080,inset 2px 2px #D4D0C8;"><div style="position:absolute;left:0;right:0;top:5px;text-align:center;line-height:13px">View Graph</div></div>
<div style="left:871px;top:734px;width:56px;height:22px;background:#D4D0C8;box-shadow:inset -1px -1px #404040,inset 1px 1px #fff,inset -2px -2px #808080,inset 2px 2px #D4D0C8;"><div style="position:absolute;left:0;right:0;top:5px;text-align:center;line-height:13px">Toolbox</div></div>
<div style="left:929px;top:734px;width:56px;height:22px;background:#D4D0C8;box-shadow:inset -1px -1px #404040,inset 1px 1px #fff,inset -2px -2px #808080,inset 2px 2px #D4D0C8;"><div style="position:absolute;left:0;right:0;top:5px;text-align:center;line-height:13px">Compare</div></div>
<div style="left:871px;top:759px;width:56px;height:23px;background:#D4D0C8;box-shadow:inset -1px -1px #000,inset 1px 1px #000,inset -2px -2px #404040,inset 2px 2px #fff,inset -3px -3px #808080;"><div style="position:absolute;left:0;right:0;top:5px;text-align:center;line-height:13px">Save</div></div>
<div style="left:929px;top:759px;width:56px;height:23px;background:#D4D0C8;box-shadow:inset -1px -1px #404040,inset 1px 1px #fff,inset -2px -2px #808080,inset 2px 2px #D4D0C8;"><div style="position:absolute;left:0;right:0;top:5px;text-align:center;line-height:13px">Cancel</div></div>
<div style="left:0px;top:791px;width:1152px;height:21px;background:#D4D0C8"></div>
<div style="left:0px;top:791px;width:1152px;height:1px;background:#D4D0C8"></div>
<div style="left:1px;top:794px;width:88px;height:16px;background:#FF0000;box-shadow:inset 0 0 0 1px #500000;"><div style="position:absolute;left:0px;right:0;top:1px;line-height:13px;text-align:center;color:#fff;white-space:nowrap">Not Emulating</div></div>
<div style="left:92px;top:793px;width:194px;height:18px;background:#D4D0C8;box-shadow:inset 1px 1px #808080,inset -1px -1px #fff;"><div style="position:absolute;left:0px;right:0;top:2px;line-height:13px;text-align:center;color:#000;white-space:nowrap">Hardware Not Found</div></div>
<div style="left:287px;top:793px;width:102px;height:18px;background:#D4D0C8;box-shadow:inset 1px 1px #808080,inset -1px -1px #fff;"><div style="position:absolute;left:0px;right:0;top:2px;line-height:13px;text-align:center;color:#000;white-space:nowrap"></div></div>
<div style="left:393px;top:794px;width:131px;height:16px;background:#FF0000;box-shadow:inset 0 0 0 1px #500000;"><div style="position:absolute;left:0px;right:0;top:1px;line-height:13px;text-align:center;color:#fff;white-space:nowrap">ALDL: Not Connected</div></div>
<div style="left:526px;top:793px;width:624px;height:18px;background:#D4D0C8;box-shadow:inset 1px 1px #808080,inset -1px -1px #fff;"><div style="position:absolute;left:3px;right:0;top:2px;line-height:13px;text-align:left;color:#000;white-space:nowrap">Table, Offset: 08FA,&nbsp; Cell Size: 8 Bit</div></div>
<div style="left:0px;top:811px;width:1152px;height:53px;background:#D4D0C8"></div>
<div style="left:0px;top:811px;width:1152px;height:1px;background:#fff"></div>
<div style="left:2px;top:815px;width:52px;height:22px;background:#D4D0C8;box-shadow:inset -1px -1px #404040,inset 1px 1px #fff,inset -2px -2px #808080,inset 2px 2px #D4D0C8;"></div>
<svg style="position:absolute;left:3px;top:817px" width="17" height="17" viewBox="0 0 17 17">
<path d="M3 2.5q2.5-1.5 5.5 0l-0.8 5q-2.5-1.2-5.5 0z" fill="#F05A22"/>
<path d="M9.5 3q2.5 1 5.5 0l-1 6q-2.5 1-5.5 0z" fill="#6CC024"/>
<path d="M2 8.5q2.5-1.2 5.5 0l-0.8 5q-2.5-1.2-5.5 0z" fill="#2A70D8"/>
<path d="M8.3 9.5q2.5 1 5.5 0l-1 5.5q-2.5 1-5.5 0z" fill="#F8C81C"/>
</svg>
<div style="left:22px;top:820px;white-space:nowrap;font-weight:bold;font-size:11px;line-height:13px;letter-spacing:0.4px">Start</div>
<svg style="position:absolute;left:61px;top:818px" width="17" height="17" viewBox="0 0 17 17"><path d="M3 2h9l3 3v9l-2 2H3l-1-2V4z" fill="#1F5FB0"/><path d="M11 4.5a5 5 0 1 0 1.5 8" fill="none" stroke="#E8F4FF" stroke-width="3"/><path d="M6 8.5h5" stroke="#1F5FB0" stroke-width="1.5"/><path d="M8 7l-2 1.5 2 1.5" fill="none" stroke="#000" stroke-width="1"/><circle cx="14.5" cy="6" r="1" fill="#C07020"/></svg>
<svg style="position:absolute;left:84px;top:818px" width="17" height="17" viewBox="0 0 17 17"><circle cx="8.5" cy="8.5" r="7.5" fill="#2A5AA8"/><circle cx="10" cy="7" r="4" fill="#3C8CD0"/><path d="M1 8q0-5 4-7q-1 3 1 4q2-2 4-1q-3 1-2 4q1 3 5 2q2-1 3-3q0 8-7.5 8.5Q1 15.5 1 8z" fill="#E8651A"/><path d="M3 12q3 3 7 2" stroke="#F6B030" stroke-width="1.5" fill="none"/></svg>
<svg style="position:absolute;left:107px;top:818px" width="17" height="17" viewBox="0 0 17 17"><circle cx="9" cy="8" r="7" fill="#2C6BC0"/><path d="M4 5q4-3 9 0" stroke="#7FB8F0" stroke-width="1.5" fill="none"/><path d="M1 10q1-3 5-3l7 3q-2 5-7 5q-5 0-5-5z" fill="#F6F0E0"/><path d="M3 10l5 2 5-2" stroke="#C08040" stroke-width="1" fill="none"/><path d="M1 11q0 3 3 4" stroke="#1A3F80" stroke-width="1.2" fill="none"/></svg>
<svg style="position:absolute;left:130px;top:818px" width="17" height="17" viewBox="0 0 17 17"><rect x="1" y="1" width="16" height="16" fill="#000060"/><rect x="3" y="3" width="12" height="1.8" fill="#fff"/><path d="M3 6h12v8H3z" fill="#fff"/><path d="M4.5 6.5l1.5 6.5 2-5 2 5 2-6.5" fill="none" stroke="#000060" stroke-width="1.6"/><path d="M13 6v7" stroke="#000060" stroke-width="1.2"/></svg>
<svg style="position:absolute;left:153px;top:818px" width="17" height="17" viewBox="0 0 17 17"><rect x="1.5" y="1.5" width="14" height="14" fill="#D8ECD0" stroke="#2E7D3A" stroke-width="1.8" stroke-dasharray="1 0.6"/><path d="M4 4l9 9M13 4l-4 4M4 13l3-3" stroke="#2E7D3A" stroke-width="2.6"/></svg>
<svg style="position:absolute;left:176px;top:818px" width="17" height="17" viewBox="0 0 17 17"><path d="M1.5 6.5h5l1 1.5h7.5v7.5H1.5z" fill="#F4D860" stroke="#A07818" stroke-width="1"/><ellipse cx="9" cy="10.5" rx="3.5" ry="2" fill="#B090D8"/><path d="M11 1l3 3.5-3 1z" fill="#5040A0"/></svg>
<svg style="position:absolute;left:199px;top:818px" width="17" height="17" viewBox="0 0 17 17"><ellipse cx="7.5" cy="11.5" rx="6.5" ry="3.5" fill="#202020"/><ellipse cx="7.5" cy="10.5" rx="5" ry="2" fill="#708090"/><path d="M5 9q2-5 7-6l4-2-2 4q1 3-3 5z" fill="#F04010"/><path d="M7 9q2-3 5-3" stroke="#FFE030" stroke-width="2" fill="none"/><path d="M4 9l1-2 2 1" fill="#70C040"/></svg>
<svg style="position:absolute;left:61px;top:840px" width="17" height="17" viewBox="0 0 17 17"><circle cx="8.5" cy="8.5" r="7.5" fill="#6CB030"/><circle cx="8.5" cy="8.5" r="5.5" fill="#A8E060"/><rect x="6" y="5" width="5" height="7" fill="#D8E870"/><path d="M4 8.5h9" stroke="#C8E060" stroke-width="1.4"/></svg>
<svg style="position:absolute;left:84px;top:840px" width="17" height="17" viewBox="0 0 17 17"><path d="M2.5 3.5a3 3 0 0 0 4 4" fill="none" stroke="#505050" stroke-width="2.4"/><path d="M4 2.5a3 3 0 0 1 3.5 3.5" fill="none" stroke="#909090" stroke-width="1.6"/><path d="M7 7l8 8" stroke="#C83020" stroke-width="3.2"/><path d="M8 7.5l6.5 6.5" stroke="#F09080" stroke-width="0.8"/></svg>
<svg style="position:absolute;left:107px;top:840px" width="17" height="17" viewBox="0 0 17 17"><path d="M3 2.5l9-1 3 13-9 1.5z" fill="#40A0E0" stroke="#80C0F0" stroke-width="0.8"/><path d="M5 4l6-1 2 9" stroke="#A0D8FF" stroke-width="1" fill="none"/></svg>
<svg style="position:absolute;left:130px;top:840px" width="17" height="17" viewBox="0 0 17 17"><rect x="1" y="1" width="15" height="15" fill="#C8F0D0"/><rect x="2.5" y="2.5" width="12" height="12" fill="#139A2E"/><path d="M6 5v7M11 5v5q0 2-2 2H6" fill="none" stroke="#fff" stroke-width="1.8"/></svg>
<svg style="position:absolute;left:153px;top:840px" width="17" height="17" viewBox="0 0 17 17"><circle cx="8.5" cy="8.5" r="7.5" fill="#E04030"/><path d="M13 4a6 6 0 1 0 1 8" fill="none" stroke="#F08858" stroke-width="2"/><circle cx="10" cy="8" r="3" fill="#E8E0E0"/><circle cx="10" cy="8" r="1.8" fill="#3070B0"/><path d="M12 8h5" stroke="#D4D0C8" stroke-width="3"/></svg>
<svg style="position:absolute;left:176px;top:840px" width="17" height="17" viewBox="0 0 17 17"><path d="M7 1.5q3-1 4 1l-1 5-4-1z" fill="#E05010"/><path d="M11 3.5l5 1-1 5-5-1z" fill="#70C030"/><path d="M1.5 9.5l4-2 4 1.5-2 5-5-1z" fill="#1E6FD0"/><path d="M9 10l5 1-1 5-5-1z" fill="#F0C010"/><circle cx="7" cy="8" r="3" fill="#E8F4FF" stroke="#607090" stroke-width="0.8"/></svg>
<svg style="position:absolute;left:199px;top:840px" width="17" height="17" viewBox="0 0 17 17"><rect x="3.5" y="1.5" width="10" height="14" rx="1.5" fill="#A8B8E0" stroke="#6070A8"/><rect x="5" y="3" width="7" height="3" fill="#E0E8FF"/><path d="M5 8h1.5M7.8 8h1.5M10.5 8h1.5M5 10.5h1.5M7.8 10.5h1.5M10.5 10.5h1.5M5 13h1.5M7.8 13h1.5M10.5 13h1.5" stroke="#4050A0" stroke-width="1.3"/></svg>
<div style="left:233px;top:815px;width:160px;height:22px;background-color:#E8E8E8;background-image:linear-gradient(45deg,#D4D0C8 25%,transparent 25%,transparent 75%,#D4D0C8 75%),linear-gradient(45deg,#D4D0C8 25%,transparent 25%,transparent 75%,#D4D0C8 75%);background-size:2px 2px;background-position:0 0,1px 1px;box-shadow:inset 1px 1px #404040,inset -1px -1px #fff,inset 2px 2px #808080;"></div>
<svg style="position:absolute;left:238px;top:820px" width="17" height="13" viewBox="0 0 17 13"><rect x="1.0" y="0.5" width="1.2" height="2.5" fill="#000"/><rect x="1.0" y="10.5" width="1.2" height="2.5" fill="#000"/><rect x="4.0" y="0.5" width="1.2" height="2.5" fill="#000"/><rect x="4.0" y="10.5" width="1.2" height="2.5" fill="#000"/><rect x="7.0" y="0.5" width="1.2" height="2.5" fill="#000"/><rect x="7.0" y="10.5" width="1.2" height="2.5" fill="#000"/><rect x="10.0" y="0.5" width="1.2" height="2.5" fill="#000"/><rect x="10.0" y="10.5" width="1.2" height="2.5" fill="#000"/><rect x="13.0" y="0.5" width="1.2" height="2.5" fill="#000"/><rect x="13.0" y="10.5" width="1.2" height="2.5" fill="#000"/><rect x="0" y="3.5" width="15.5" height="7" fill="#000"/></svg>
<div style="left:258px;top:819px;white-space:nowrap;font-weight:bold;font-size:12px;line-height:14px;letter-spacing:-0.2px">TunerPro RT - BFUZ32...</div>
<div style="left:396px;top:815px;width:160px;height:22px;background:#D4D0C8;box-shadow:inset -1px -1px #404040,inset 1px 1px #fff,inset -2px -2px #808080,inset 2px 2px #D4D0C8;"></div>
<svg style="position:absolute;left:400px;top:818px" width="17" height="17" viewBox="0 0 17 17"><circle cx="8.5" cy="8.5" r="7" fill="#E66000"/><circle cx="9.5" cy="7.5" r="4" fill="#1C4B9C"/><path d="M2 9q2 6 8 6q-6-2-5-8z" fill="#FF9500"/></svg>
<div style="left:420px;top:819px;white-space:nowrap;line-height:13px">60DegreeV6.com - Post ...</div>
<div style="left:1005px;top:815px;width:145px;height:47px;box-shadow:inset 1px 1px #808080,inset -1px -1px #fff"></div>
<svg style="position:absolute;left:1008px;top:819px" width="17" height="17" viewBox="0 0 17 17"><circle cx="5.5" cy="5" r="4" fill="#F8D838" stroke="#404828" stroke-width="1"/><rect x="8.5" y="8.5" width="7.5" height="7" rx="1" fill="#B8E0F8" stroke="#2858A0" stroke-width="1.4"/><path d="M2 8q1 4 6 5" stroke="#1E3C78" stroke-width="1.8" fill="none"/></svg>
<svg style="position:absolute;left:1026px;top:819px" width="17" height="17" viewBox="0 0 17 17"><path d="M1 2.5q3-2 7 0v6q-4-1-7 0z" fill="#F0C820"/><path d="M8 2.5q4 1 8-1v6.5q-4 1.5-8 0.5z" fill="#1848B0"/><path d="M1 8.5q3-1 7 0v7q-4-1-7 0z" fill="#30A028"/><path d="M8 8.5q4 1 8-0.5v6.5q-4 1.5-8 0.5z" fill="#E02018"/></svg>
<svg style="position:absolute;left:1044px;top:819px" width="17" height="17" viewBox="0 0 17 17"><circle cx="8.5" cy="8.5" r="7" fill="#E8E4E8" stroke="#A09CA8" stroke-width="1.3"/><path d="M4.5 9a4 4 0 0 1 7-3M12.5 8a4 4 0 0 1-7 3" stroke="#8C8890" stroke-width="1.6" fill="none"/><path d="M11 4l1.5 3-3 0z M6 13l-1.5-3 3 0z" fill="#8C8890"/></svg>
<svg style="position:absolute;left:1062px;top:819px" width="17" height="17" viewBox="0 0 17 17"><circle cx="10.5" cy="6" r="5" fill="#38A838" stroke="#207020" stroke-width="0.8"/><path d="M8 6l2 2 3-3.5" stroke="#fff" stroke-width="1.4" fill="none"/><path d="M1 6l2-2 2 2-2 2zM2 12l2-2 2 2-2 2zM7 12l2-2 2 2-2 2zM11 12l2-2 2 2-2 2z" fill="none" stroke="#707070" stroke-width="0.8"/></svg>
<svg style="position:absolute;left:1008px;top:839px" width="17" height="17" viewBox="0 0 17 17"><path d="M8.5 1l6.5 2v5q0 6-6.5 8q-6.5-2-6.5-8V3z" fill="#F4F8EC" stroke="#283848" stroke-width="1.3"/><path d="M5 8.5l3 2.5 4-4.5" stroke="#508828" stroke-width="1.6" fill="none"/></svg>
<svg style="position:absolute;left:1026px;top:839px" width="17" height="17" viewBox="0 0 17 17"><circle cx="7" cy="7" r="6" fill="#606060"/><circle cx="7" cy="7" r="4" fill="#909090"/><circle cx="6" cy="6" r="2" fill="#484850"/><path d="M10 13q3 1 5-2M11 15q3 0 5-3" stroke="#8888C8" stroke-width="0.9" fill="none"/></svg>
<svg style="position:absolute;left:1044px;top:839px" width="17" height="17" viewBox="0 0 17 17"><path d="M3 12l8-4 5 3-8 4z" fill="#607088"/><path d="M5 11.5l6-3 3 2-6 3z" fill="#A8B8D8"/><path d="M2 3l4-3 4 3-2 0v4h-4v-4z" fill="#40A830" transform="translate(0,1) rotate(-20 6 4)"/></svg>
<svg style="position:absolute;left:1062px;top:839px" width="17" height="17" viewBox="0 0 17 17"><path d="M1 14.5l5.5-11.5h9.5v11.5z" fill="#E00818"/><path d="M3.5 13l4-8.5h2l-1 8.5z" fill="#fff"/><path d="M10 5h5v2h-1.5v6h-2V7H10z" fill="#fff"/><path d="M5 11h3" stroke="#E00818" stroke-width="1.5"/></svg>
<div style="left:1090px;top:823px;white-space:nowrap;line-height:13px">10:26 AM</div>
<div style="left:1093px;top:841px;white-space:nowrap;line-height:13px">Tuesday</div>
</body></html>
